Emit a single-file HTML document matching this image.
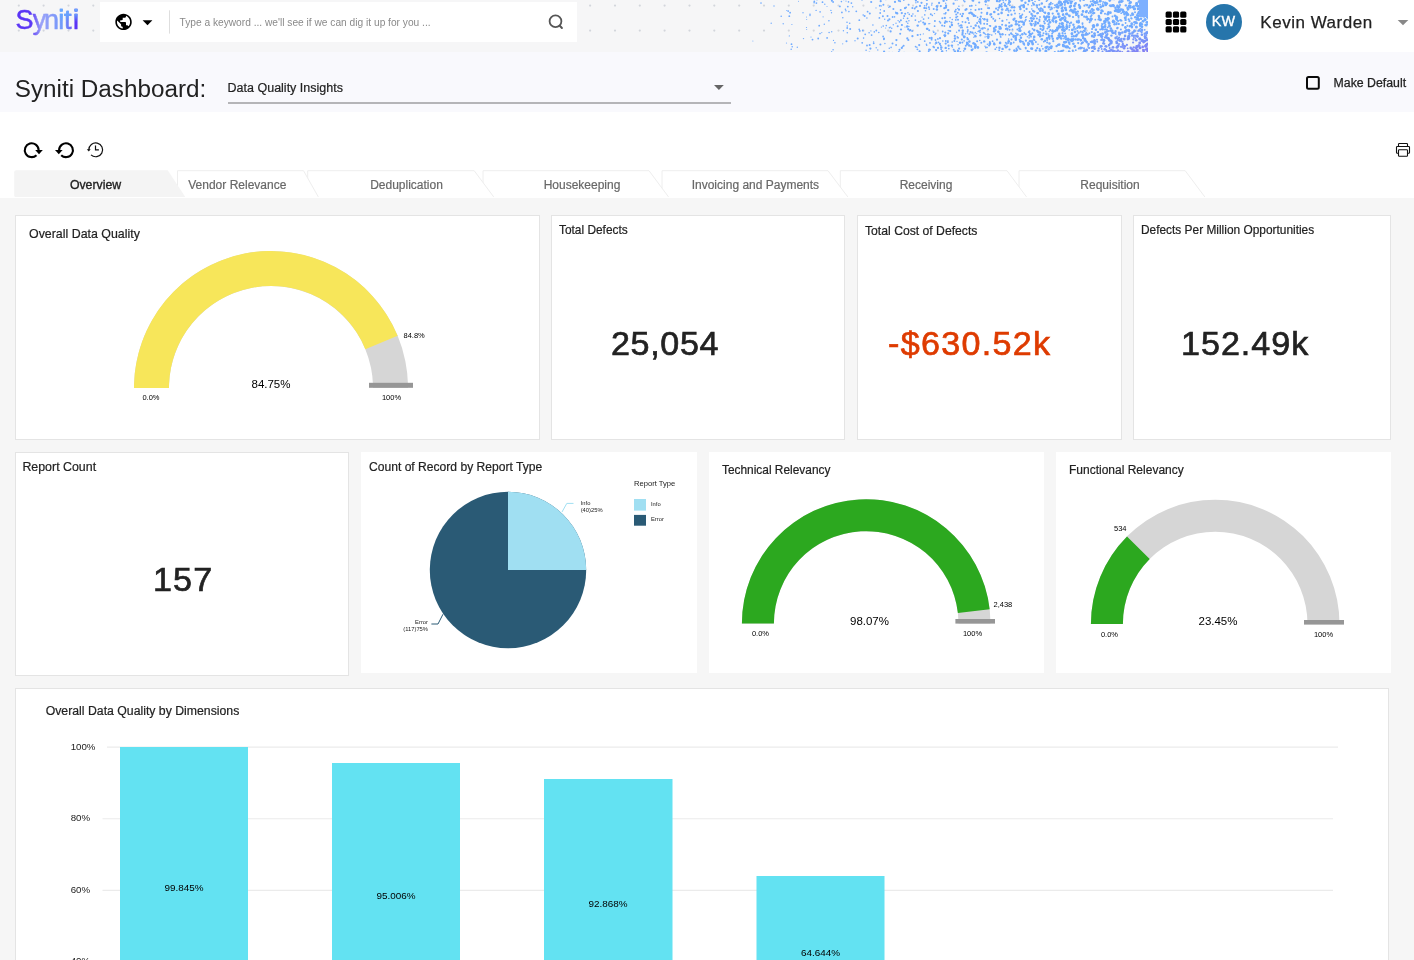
<!DOCTYPE html>
<html lang="en">
<head>
<meta charset="utf-8">
<title>Syniti Dashboard</title>
<style>
*{box-sizing:border-box;margin:0;padding:0}
html,body{width:1414px;height:960px;overflow:hidden}
body{position:relative;background:#f6f6f6;font-family:"Liberation Sans",sans-serif;color:#222}
.abs{position:absolute}
.t{position:absolute;white-space:nowrap;line-height:1}
#hdr{left:0;top:0;width:1414px;height:52px;background:#f6f6f7}
#search{left:100px;top:2px;width:477px;height:40px;background:#fff}
#userbox{left:1148px;top:0;width:266px;height:52px;background:#fff}
#band{left:0;top:52px;width:1414px;height:60px;background:#f9f9fd}
#tools{left:0;top:112px;width:1414px;height:85.900px;background:#fff}
.card{position:absolute;background:#fff;border:1px solid #e4e4e4}
.card.nb{border-color:#fff}
.ct{position:absolute;white-space:nowrap;line-height:1;font-size:12.4px;color:#222;-webkit-text-stroke:0.2px #222}
.kpi{position:absolute;white-space:nowrap;line-height:1;font-size:32.800px;color:#222;-webkit-text-stroke:0.650px currentColor;letter-spacing:0.600px;transform-origin:0 50%;transform:scaleX(1.040)}
.tab{position:absolute;top:170px;height:27px}
.tl{position:absolute;top:178.900px;white-space:nowrap;line-height:1;font-size:12px;color:#686868;-webkit-text-stroke:0.200px #686868;transform:translateX(-50%)}
svg{position:absolute;left:0;top:0;overflow:visible}
svg text{font-family:"Liberation Sans",sans-serif}
</style>
</head>
<body>
<div id="root" style="position:absolute;left:0;top:0;width:1414px;height:960px;will-change:transform">
<!-- header -->
<div id="hdr" class="abs"></div>
<svg width="1414" height="52" viewBox="0 0 1414 52" style="overflow:hidden">
<circle cx="18.8" cy="5.6" r="1.1" fill="#d3d6dc"/>
<circle cx="18.8" cy="30.6" r="1.1" fill="#d3d6dc"/>
<circle cx="43.6" cy="5.6" r="1.1" fill="#d3d6dc"/>
<circle cx="43.6" cy="30.6" r="1.1" fill="#d3d6dc"/>
<circle cx="68.5" cy="5.6" r="1.1" fill="#d3d6dc"/>
<circle cx="68.5" cy="30.6" r="1.1" fill="#d3d6dc"/>
<circle cx="93.3" cy="5.6" r="1.1" fill="#d3d6dc"/>
<circle cx="93.3" cy="30.6" r="1.1" fill="#d3d6dc"/>
<circle cx="590.1" cy="5.6" r="1.1" fill="#d3d6dc"/>
<circle cx="590.1" cy="30.6" r="1.1" fill="#d3d6dc"/>
<circle cx="615.0" cy="5.6" r="1.1" fill="#d3d6dc"/>
<circle cx="615.0" cy="30.6" r="1.1" fill="#d3d6dc"/>
<circle cx="639.8" cy="5.6" r="1.1" fill="#d3d6dc"/>
<circle cx="639.8" cy="30.6" r="1.1" fill="#d3d6dc"/>
<circle cx="664.6" cy="5.6" r="1.1" fill="#d3d6dc"/>
<circle cx="664.6" cy="30.6" r="1.1" fill="#d3d6dc"/>
<circle cx="689.5" cy="5.6" r="1.1" fill="#d3d6dc"/>
<circle cx="689.5" cy="30.6" r="1.1" fill="#d3d6dc"/>
<circle cx="714.3" cy="5.6" r="1.1" fill="#d3d6dc"/>
<circle cx="714.3" cy="30.6" r="1.1" fill="#d3d6dc"/>
<circle cx="739.2" cy="5.6" r="1.1" fill="#d3d6dc"/>
<circle cx="739.2" cy="30.6" r="1.1" fill="#d3d6dc"/>
<circle cx="764.0" cy="5.6" r="1.1" fill="#d3d6dc"/>
<circle cx="764.0" cy="30.6" r="1.1" fill="#d3d6dc"/>
<circle cx="788.8" cy="5.6" r="1.1" fill="#d3d6dc"/>
<circle cx="788.8" cy="30.6" r="1.1" fill="#d3d6dc"/>
<circle cx="813.7" cy="5.6" r="1.1" fill="#d3d6dc"/>
<circle cx="813.7" cy="30.6" r="1.1" fill="#d3d6dc"/>
<circle cx="838.5" cy="5.6" r="1.1" fill="#d3d6dc"/>
<circle cx="838.5" cy="30.6" r="1.1" fill="#d3d6dc"/>
<circle cx="863.4" cy="5.6" r="1.1" fill="#d3d6dc"/>
<circle cx="863.4" cy="30.6" r="1.1" fill="#d3d6dc"/>
<circle cx="888.2" cy="5.6" r="1.1" fill="#d3d6dc"/>
<circle cx="888.2" cy="30.6" r="1.1" fill="#d3d6dc"/>
<circle cx="913.0" cy="5.6" r="1.1" fill="#d3d6dc"/>
<circle cx="913.0" cy="30.6" r="1.1" fill="#d3d6dc"/>
<circle cx="937.9" cy="5.6" r="1.1" fill="#d3d6dc"/>
<circle cx="937.9" cy="30.6" r="1.1" fill="#d3d6dc"/>
<circle cx="962.7" cy="5.6" r="1.1" fill="#d3d6dc"/>
<circle cx="962.7" cy="30.6" r="1.1" fill="#d3d6dc"/>
<circle cx="987.6" cy="5.6" r="1.1" fill="#d3d6dc"/>
<circle cx="987.6" cy="30.6" r="1.1" fill="#d3d6dc"/>
<circle cx="1012.4" cy="5.6" r="1.1" fill="#d3d6dc"/>
<circle cx="1012.4" cy="30.6" r="1.1" fill="#d3d6dc"/>
<circle cx="1037.2" cy="5.6" r="1.1" fill="#d3d6dc"/>
<circle cx="1037.2" cy="30.6" r="1.1" fill="#d3d6dc"/>
<circle cx="1062.1" cy="5.6" r="1.1" fill="#d3d6dc"/>
<circle cx="1062.1" cy="30.6" r="1.1" fill="#d3d6dc"/>
<circle cx="1086.9" cy="5.6" r="1.1" fill="#d3d6dc"/>
<circle cx="1086.9" cy="30.6" r="1.1" fill="#d3d6dc"/>
<circle cx="1111.8" cy="5.6" r="1.1" fill="#d3d6dc"/>
<circle cx="1111.8" cy="30.6" r="1.1" fill="#d3d6dc"/>
<circle cx="1136.6" cy="5.6" r="1.1" fill="#d3d6dc"/>
<circle cx="1136.6" cy="30.6" r="1.1" fill="#d3d6dc"/>
<circle cx="917.8" cy="1.9" r="0.9" fill="rgb(112,171,255)"/>
<circle cx="1079.0" cy="4.9" r="1.2" fill="rgb(112,171,255)"/>
<circle cx="1128.6" cy="30.3" r="1.6" fill="rgb(114,165,253)"/>
<circle cx="1019.0" cy="21.9" r="1.1" fill="rgb(112,171,255)"/>
<circle cx="858.1" cy="52.9" r="0.8" fill="rgb(112,171,255)"/>
<circle cx="974.9" cy="47.0" r="1.1" fill="rgb(112,171,255)"/>
<circle cx="1084.4" cy="50.9" r="1.3" fill="rgb(114,164,253)"/>
<circle cx="1147.2" cy="44.0" r="1.2" fill="rgb(125,138,246)"/>
<circle cx="1055.0" cy="5.2" r="1.0" fill="rgb(112,171,255)"/>
<circle cx="1097.3" cy="2.5" r="1.2" fill="rgb(112,171,255)"/>
<circle cx="1102.5" cy="51.6" r="1.0" fill="rgb(119,152,250)"/>
<circle cx="981.5" cy="12.7" r="1.0" fill="rgb(112,171,255)"/>
<circle cx="900.9" cy="20.3" r="1.0" fill="rgb(112,171,255)"/>
<circle cx="806.5" cy="17.0" r="0.5" fill="rgb(112,171,255)"/>
<circle cx="1147.2" cy="24.1" r="0.9" fill="rgb(112,171,255)"/>
<circle cx="1079.8" cy="7.0" r="1.5" fill="rgb(112,171,255)"/>
<circle cx="1094.0" cy="37.0" r="1.1" fill="rgb(114,165,253)"/>
<circle cx="1059.4" cy="16.5" r="1.3" fill="rgb(112,171,255)"/>
<circle cx="1075.5" cy="39.4" r="1.2" fill="rgb(112,170,254)"/>
<circle cx="885.8" cy="-0.4" r="0.7" fill="rgb(112,171,255)"/>
<circle cx="1131.6" cy="18.4" r="1.0" fill="rgb(112,171,255)"/>
<circle cx="1109.1" cy="45.1" r="1.3" fill="rgb(118,154,250)"/>
<circle cx="1037.2" cy="7.5" r="0.9" fill="rgb(112,171,255)"/>
<circle cx="1111.0" cy="43.2" r="1.4" fill="rgb(118,155,251)"/>
<circle cx="1141.9" cy="34.8" r="1.3" fill="rgb(118,156,251)"/>
<circle cx="1126.3" cy="12.5" r="1.5" fill="rgb(112,171,255)"/>
<circle cx="1084.4" cy="5.7" r="1.1" fill="rgb(112,171,255)"/>
<circle cx="995.8" cy="26.7" r="1.3" fill="rgb(112,171,255)"/>
<circle cx="1063.2" cy="52.4" r="1.0" fill="rgb(112,171,255)"/>
<circle cx="1075.8" cy="12.5" r="1.4" fill="rgb(112,171,255)"/>
<circle cx="973.9" cy="37.2" r="0.7" fill="rgb(112,171,255)"/>
<circle cx="1022.2" cy="21.8" r="1.3" fill="rgb(112,171,255)"/>
<circle cx="1000.1" cy="42.9" r="1.3" fill="rgb(112,171,255)"/>
<circle cx="1040.6" cy="28.9" r="1.1" fill="rgb(112,171,255)"/>
<circle cx="1029.8" cy="33.6" r="1.0" fill="rgb(112,171,255)"/>
<circle cx="1043.8" cy="12.3" r="0.8" fill="rgb(112,171,255)"/>
<circle cx="866.9" cy="18.0" r="0.8" fill="rgb(112,171,255)"/>
<circle cx="934.6" cy="26.2" r="0.9" fill="rgb(112,171,255)"/>
<circle cx="903.8" cy="0.3" r="0.8" fill="rgb(112,171,255)"/>
<circle cx="1100.4" cy="19.8" r="1.5" fill="rgb(112,171,255)"/>
<circle cx="1024.3" cy="10.9" r="0.8" fill="rgb(112,171,255)"/>
<circle cx="1019.1" cy="25.4" r="1.2" fill="rgb(112,171,255)"/>
<circle cx="1140.1" cy="25.7" r="1.2" fill="rgb(112,171,255)"/>
<circle cx="1003.5" cy="2.3" r="0.9" fill="rgb(112,171,255)"/>
<circle cx="1136.9" cy="23.2" r="1.0" fill="rgb(112,171,255)"/>
<circle cx="1127.7" cy="9.8" r="1.0" fill="rgb(112,171,255)"/>
<circle cx="954.9" cy="51.4" r="1.2" fill="rgb(112,171,255)"/>
<circle cx="924.8" cy="14.9" r="0.8" fill="rgb(112,171,255)"/>
<circle cx="869.6" cy="45.1" r="1.0" fill="rgb(112,171,255)"/>
<circle cx="1032.3" cy="48.5" r="1.0" fill="rgb(112,171,255)"/>
<circle cx="1048.6" cy="34.1" r="0.8" fill="rgb(112,171,255)"/>
<circle cx="1120.0" cy="5.1" r="1.1" fill="rgb(112,171,255)"/>
<circle cx="968.5" cy="20.1" r="0.8" fill="rgb(112,171,255)"/>
<circle cx="924.5" cy="5.8" r="0.7" fill="rgb(112,171,255)"/>
<circle cx="1047.4" cy="21.1" r="1.1" fill="rgb(112,171,255)"/>
<circle cx="894.5" cy="16.9" r="0.8" fill="rgb(112,171,255)"/>
<circle cx="1136.8" cy="5.0" r="1.3" fill="rgb(112,171,255)"/>
<circle cx="1093.8" cy="10.1" r="1.0" fill="rgb(112,171,255)"/>
<circle cx="1088.0" cy="46.9" r="0.8" fill="rgb(114,163,253)"/>
<circle cx="1138.6" cy="11.9" r="1.0" fill="rgb(112,171,255)"/>
<circle cx="927.5" cy="28.9" r="1.1" fill="rgb(112,171,255)"/>
<circle cx="1000.9" cy="37.1" r="0.8" fill="rgb(112,171,255)"/>
<circle cx="831.7" cy="31.7" r="0.7" fill="rgb(112,171,255)"/>
<circle cx="1102.3" cy="24.6" r="1.0" fill="rgb(112,171,255)"/>
<circle cx="1133.9" cy="37.5" r="0.9" fill="rgb(119,153,250)"/>
<circle cx="912.4" cy="36.2" r="1.1" fill="rgb(112,171,255)"/>
<circle cx="1043.0" cy="26.3" r="1.4" fill="rgb(112,171,255)"/>
<circle cx="1130.3" cy="25.8" r="1.0" fill="rgb(112,171,255)"/>
<circle cx="1139.4" cy="5.9" r="0.9" fill="rgb(112,171,255)"/>
<circle cx="884.1" cy="51.5" r="1.1" fill="rgb(112,171,255)"/>
<circle cx="1077.0" cy="22.2" r="1.1" fill="rgb(112,171,255)"/>
<circle cx="889.3" cy="48.2" r="0.8" fill="rgb(112,171,255)"/>
<circle cx="1072.8" cy="40.9" r="0.8" fill="rgb(112,171,255)"/>
<circle cx="1046.4" cy="48.3" r="1.0" fill="rgb(112,171,255)"/>
<circle cx="1132.7" cy="32.6" r="1.4" fill="rgb(115,161,252)"/>
<circle cx="869.8" cy="13.4" r="1.0" fill="rgb(112,171,255)"/>
<circle cx="1132.3" cy="51.4" r="1.0" fill="rgb(127,134,245)"/>
<circle cx="1060.7" cy="2.4" r="1.3" fill="rgb(112,171,255)"/>
<circle cx="841.4" cy="1.6" r="0.8" fill="rgb(112,171,255)"/>
<circle cx="1145.0" cy="12.8" r="0.9" fill="rgb(112,171,255)"/>
<circle cx="1042.6" cy="9.2" r="0.9" fill="rgb(112,171,255)"/>
<circle cx="1007.9" cy="53.5" r="1.0" fill="rgb(112,171,255)"/>
<circle cx="985.8" cy="34.5" r="0.7" fill="rgb(112,171,255)"/>
<circle cx="964.7" cy="1.5" r="0.9" fill="rgb(112,171,255)"/>
<circle cx="965.6" cy="33.8" r="0.8" fill="rgb(112,171,255)"/>
<circle cx="1025.1" cy="20.9" r="0.9" fill="rgb(112,171,255)"/>
<circle cx="1130.8" cy="15.5" r="1.1" fill="rgb(112,171,255)"/>
<circle cx="1102.0" cy="23.8" r="0.8" fill="rgb(112,171,255)"/>
<circle cx="953.7" cy="49.8" r="1.0" fill="rgb(112,171,255)"/>
<circle cx="1070.0" cy="52.1" r="0.9" fill="rgb(112,171,255)"/>
<circle cx="1126.7" cy="52.6" r="0.9" fill="rgb(126,136,246)"/>
<circle cx="994.3" cy="44.2" r="1.2" fill="rgb(112,171,255)"/>
<circle cx="1080.0" cy="8.2" r="1.1" fill="rgb(112,171,255)"/>
<circle cx="952.3" cy="19.5" r="0.8" fill="rgb(112,171,255)"/>
<circle cx="1037.2" cy="48.2" r="1.1" fill="rgb(112,171,255)"/>
<circle cx="923.2" cy="22.5" r="1.0" fill="rgb(112,171,255)"/>
<circle cx="1059.8" cy="23.7" r="1.1" fill="rgb(112,171,255)"/>
<circle cx="1132.2" cy="49.3" r="1.4" fill="rgb(126,137,246)"/>
<circle cx="1121.5" cy="1.7" r="1.4" fill="rgb(112,171,255)"/>
<circle cx="1074.4" cy="6.0" r="1.4" fill="rgb(112,171,255)"/>
<circle cx="977.8" cy="47.4" r="1.3" fill="rgb(112,171,255)"/>
<circle cx="812.5" cy="39.6" r="0.9" fill="rgb(112,171,255)"/>
<circle cx="980.2" cy="35.2" r="0.7" fill="rgb(112,171,255)"/>
<circle cx="979.3" cy="31.0" r="1.1" fill="rgb(112,171,255)"/>
<circle cx="839.9" cy="6.4" r="0.9" fill="rgb(112,171,255)"/>
<circle cx="1097.2" cy="41.8" r="1.0" fill="rgb(115,161,252)"/>
<circle cx="1124.2" cy="39.1" r="1.5" fill="rgb(118,154,250)"/>
<circle cx="925.5" cy="10.7" r="0.8" fill="rgb(112,171,255)"/>
<circle cx="1063.3" cy="27.3" r="1.2" fill="rgb(112,171,255)"/>
<circle cx="973.8" cy="15.2" r="1.1" fill="rgb(112,171,255)"/>
<circle cx="881.4" cy="5.9" r="0.6" fill="rgb(112,171,255)"/>
<circle cx="1114.9" cy="50.9" r="1.0" fill="rgb(122,145,248)"/>
<circle cx="998.9" cy="14.1" r="0.8" fill="rgb(112,171,255)"/>
<circle cx="1050.5" cy="9.5" r="1.1" fill="rgb(112,171,255)"/>
<circle cx="1033.5" cy="18.6" r="1.4" fill="rgb(112,171,255)"/>
<circle cx="1140.9" cy="-1.8" r="1.2" fill="rgb(112,171,255)"/>
<circle cx="1127.0" cy="13.9" r="1.4" fill="rgb(112,171,255)"/>
<circle cx="1062.6" cy="33.2" r="1.1" fill="rgb(112,171,255)"/>
<circle cx="901.8" cy="47.9" r="1.1" fill="rgb(112,171,255)"/>
<circle cx="1109.5" cy="26.1" r="1.5" fill="rgb(112,170,254)"/>
<circle cx="882.9" cy="16.3" r="1.0" fill="rgb(112,171,255)"/>
<circle cx="1011.5" cy="39.6" r="1.0" fill="rgb(112,171,255)"/>
<circle cx="1057.1" cy="30.4" r="1.1" fill="rgb(112,171,255)"/>
<circle cx="1102.9" cy="11.3" r="1.0" fill="rgb(112,171,255)"/>
<circle cx="1028.3" cy="45.2" r="0.9" fill="rgb(112,171,255)"/>
<circle cx="1139.8" cy="38.8" r="1.6" fill="rgb(120,149,249)"/>
<circle cx="1065.9" cy="39.1" r="0.9" fill="rgb(112,171,255)"/>
<circle cx="1001.6" cy="4.0" r="1.0" fill="rgb(112,171,255)"/>
<circle cx="1032.4" cy="33.3" r="1.0" fill="rgb(112,171,255)"/>
<circle cx="1016.9" cy="50.1" r="1.2" fill="rgb(112,171,255)"/>
<circle cx="1139.6" cy="0.1" r="1.0" fill="rgb(112,171,255)"/>
<circle cx="1079.9" cy="27.2" r="1.5" fill="rgb(112,170,254)"/>
<circle cx="1125.4" cy="27.5" r="1.4" fill="rgb(112,169,254)"/>
<circle cx="900.7" cy="9.9" r="1.0" fill="rgb(112,171,255)"/>
<circle cx="1071.9" cy="33.5" r="1.2" fill="rgb(112,171,255)"/>
<circle cx="1088.8" cy="13.0" r="1.0" fill="rgb(112,171,255)"/>
<circle cx="914.7" cy="8.4" r="1.0" fill="rgb(112,171,255)"/>
<circle cx="1111.4" cy="41.9" r="1.4" fill="rgb(118,156,251)"/>
<circle cx="999.6" cy="-1.2" r="1.3" fill="rgb(112,171,255)"/>
<circle cx="1008.9" cy="12.0" r="0.8" fill="rgb(112,171,255)"/>
<circle cx="1063.1" cy="45.0" r="1.3" fill="rgb(112,171,255)"/>
<circle cx="1101.9" cy="29.1" r="1.0" fill="rgb(112,168,254)"/>
<circle cx="967.2" cy="44.3" r="1.2" fill="rgb(112,171,255)"/>
<circle cx="1064.7" cy="16.5" r="1.0" fill="rgb(112,171,255)"/>
<circle cx="963.6" cy="0.8" r="0.7" fill="rgb(112,171,255)"/>
<circle cx="1052.7" cy="3.7" r="0.8" fill="rgb(112,171,255)"/>
<circle cx="970.5" cy="12.4" r="0.9" fill="rgb(112,171,255)"/>
<circle cx="1122.9" cy="1.1" r="0.9" fill="rgb(112,171,255)"/>
<circle cx="1116.6" cy="23.0" r="1.1" fill="rgb(112,171,255)"/>
<circle cx="934.9" cy="21.1" r="1.0" fill="rgb(112,171,255)"/>
<circle cx="827.0" cy="6.5" r="0.5" fill="rgb(112,171,255)"/>
<circle cx="1040.8" cy="8.5" r="1.3" fill="rgb(112,171,255)"/>
<circle cx="1135.4" cy="38.2" r="0.9" fill="rgb(119,152,250)"/>
<circle cx="1006.8" cy="43.8" r="0.9" fill="rgb(112,171,255)"/>
<circle cx="1061.7" cy="29.7" r="0.8" fill="rgb(112,171,255)"/>
<circle cx="1080.8" cy="31.7" r="1.1" fill="rgb(112,170,254)"/>
<circle cx="1020.7" cy="49.2" r="0.8" fill="rgb(112,171,255)"/>
<circle cx="967.0" cy="42.7" r="1.1" fill="rgb(112,171,255)"/>
<circle cx="1017.8" cy="24.1" r="0.9" fill="rgb(112,171,255)"/>
<circle cx="1102.9" cy="27.2" r="1.2" fill="rgb(112,170,254)"/>
<circle cx="905.0" cy="27.0" r="0.6" fill="rgb(112,171,255)"/>
<circle cx="1148.8" cy="18.9" r="1.3" fill="rgb(112,171,255)"/>
<circle cx="881.4" cy="27.1" r="0.6" fill="rgb(112,171,255)"/>
<circle cx="1146.1" cy="46.5" r="1.3" fill="rgb(127,134,245)"/>
<circle cx="1135.0" cy="12.2" r="1.0" fill="rgb(112,171,255)"/>
<circle cx="814.1" cy="2.7" r="0.8" fill="rgb(112,171,255)"/>
<circle cx="1132.1" cy="35.5" r="1.2" fill="rgb(117,157,251)"/>
<circle cx="1125.1" cy="35.9" r="1.3" fill="rgb(117,158,251)"/>
<circle cx="1050.7" cy="3.9" r="0.9" fill="rgb(112,171,255)"/>
<circle cx="935.8" cy="33.2" r="0.8" fill="rgb(112,171,255)"/>
<circle cx="1084.2" cy="16.7" r="1.1" fill="rgb(112,171,255)"/>
<circle cx="870.4" cy="48.6" r="1.1" fill="rgb(112,171,255)"/>
<circle cx="879.8" cy="5.8" r="1.0" fill="rgb(112,171,255)"/>
<circle cx="1031.8" cy="9.0" r="0.8" fill="rgb(112,171,255)"/>
<circle cx="989.5" cy="25.7" r="0.8" fill="rgb(112,171,255)"/>
<circle cx="979.0" cy="9.3" r="1.1" fill="rgb(112,171,255)"/>
<circle cx="907.3" cy="38.4" r="1.1" fill="rgb(112,171,255)"/>
<circle cx="1074.8" cy="46.5" r="1.3" fill="rgb(112,170,254)"/>
<circle cx="896.4" cy="40.1" r="1.1" fill="rgb(112,171,255)"/>
<circle cx="1131.2" cy="25.7" r="1.2" fill="rgb(112,171,255)"/>
<circle cx="842.7" cy="43.8" r="0.6" fill="rgb(112,171,255)"/>
<circle cx="1026.6" cy="8.9" r="1.1" fill="rgb(112,171,255)"/>
<circle cx="945.3" cy="13.7" r="0.9" fill="rgb(112,171,255)"/>
<circle cx="1058.5" cy="17.0" r="1.0" fill="rgb(112,171,255)"/>
<circle cx="1123.1" cy="12.0" r="1.3" fill="rgb(112,171,255)"/>
<circle cx="889.4" cy="27.7" r="0.8" fill="rgb(112,171,255)"/>
<circle cx="947.0" cy="-0.8" r="1.2" fill="rgb(112,171,255)"/>
<circle cx="1119.0" cy="32.8" r="1.2" fill="rgb(115,163,253)"/>
<circle cx="865.2" cy="34.3" r="0.9" fill="rgb(112,171,255)"/>
<circle cx="1132.0" cy="26.8" r="1.2" fill="rgb(112,169,254)"/>
<circle cx="958.9" cy="6.3" r="0.8" fill="rgb(112,171,255)"/>
<circle cx="932.3" cy="15.4" r="0.8" fill="rgb(112,171,255)"/>
<circle cx="1056.6" cy="6.9" r="1.4" fill="rgb(112,171,255)"/>
<circle cx="920.4" cy="39.2" r="0.8" fill="rgb(112,171,255)"/>
<circle cx="1133.3" cy="39.4" r="1.1" fill="rgb(120,151,250)"/>
<circle cx="1088.5" cy="44.0" r="1.3" fill="rgb(114,164,253)"/>
<circle cx="792.2" cy="46.8" r="0.8" fill="rgb(112,171,255)"/>
<circle cx="1097.8" cy="32.0" r="1.1" fill="rgb(113,167,254)"/>
<circle cx="944.8" cy="22.9" r="0.8" fill="rgb(112,171,255)"/>
<circle cx="1128.6" cy="35.9" r="0.9" fill="rgb(117,157,251)"/>
<circle cx="1148.4" cy="17.2" r="1.5" fill="rgb(112,171,255)"/>
<circle cx="1078.7" cy="26.7" r="1.4" fill="rgb(112,170,254)"/>
<circle cx="1104.1" cy="21.6" r="1.0" fill="rgb(112,171,255)"/>
<circle cx="949.8" cy="26.3" r="0.8" fill="rgb(112,171,255)"/>
<circle cx="998.3" cy="31.8" r="1.3" fill="rgb(112,171,255)"/>
<circle cx="980.3" cy="35.4" r="1.0" fill="rgb(112,171,255)"/>
<circle cx="908.6" cy="4.8" r="1.0" fill="rgb(112,171,255)"/>
<circle cx="1070.7" cy="1.5" r="1.3" fill="rgb(112,171,255)"/>
<circle cx="1110.6" cy="30.6" r="1.2" fill="rgb(113,166,253)"/>
<circle cx="994.3" cy="12.0" r="1.3" fill="rgb(112,171,255)"/>
<circle cx="938.6" cy="42.4" r="0.8" fill="rgb(112,171,255)"/>
<circle cx="859.2" cy="29.4" r="0.8" fill="rgb(112,171,255)"/>
<circle cx="898.1" cy="20.6" r="0.7" fill="rgb(112,171,255)"/>
<circle cx="1078.6" cy="17.7" r="0.9" fill="rgb(112,171,255)"/>
<circle cx="856.3" cy="11.3" r="0.9" fill="rgb(112,171,255)"/>
<circle cx="1070.0" cy="6.9" r="1.3" fill="rgb(112,171,255)"/>
<circle cx="1129.9" cy="26.3" r="1.2" fill="rgb(112,170,254)"/>
<circle cx="1108.8" cy="30.9" r="1.0" fill="rgb(113,166,253)"/>
<circle cx="1009.6" cy="29.8" r="1.0" fill="rgb(112,171,255)"/>
<circle cx="871.6" cy="35.1" r="0.9" fill="rgb(112,171,255)"/>
<circle cx="1101.9" cy="46.2" r="1.0" fill="rgb(117,157,251)"/>
<circle cx="1032.2" cy="0.3" r="0.9" fill="rgb(112,171,255)"/>
<circle cx="1020.6" cy="17.5" r="1.3" fill="rgb(112,171,255)"/>
<circle cx="1058.4" cy="14.0" r="1.4" fill="rgb(112,171,255)"/>
<circle cx="989.0" cy="0.7" r="0.8" fill="rgb(112,171,255)"/>
<circle cx="1028.1" cy="43.1" r="1.1" fill="rgb(112,171,255)"/>
<circle cx="1137.5" cy="33.7" r="1.0" fill="rgb(117,158,251)"/>
<circle cx="1029.9" cy="35.5" r="0.9" fill="rgb(112,171,255)"/>
<circle cx="888.8" cy="7.4" r="0.6" fill="rgb(112,171,255)"/>
<circle cx="1146.8" cy="40.0" r="1.4" fill="rgb(122,145,248)"/>
<circle cx="1141.9" cy="29.6" r="1.2" fill="rgb(114,164,253)"/>
<circle cx="1086.7" cy="49.9" r="1.4" fill="rgb(115,163,253)"/>
<circle cx="1080.5" cy="39.6" r="0.9" fill="rgb(112,168,254)"/>
<circle cx="1078.4" cy="15.9" r="1.2" fill="rgb(112,171,255)"/>
<circle cx="1127.4" cy="25.7" r="1.0" fill="rgb(112,171,255)"/>
<circle cx="862.8" cy="30.5" r="0.9" fill="rgb(112,171,255)"/>
<circle cx="818.2" cy="38.5" r="0.9" fill="rgb(112,171,255)"/>
<circle cx="1090.7" cy="42.1" r="1.0" fill="rgb(114,164,253)"/>
<circle cx="1078.7" cy="48.6" r="1.0" fill="rgb(112,168,254)"/>
<circle cx="994.1" cy="43.4" r="1.1" fill="rgb(112,171,255)"/>
<circle cx="950.4" cy="31.0" r="0.9" fill="rgb(112,171,255)"/>
<circle cx="1128.7" cy="38.4" r="1.3" fill="rgb(119,154,250)"/>
<circle cx="1083.6" cy="30.6" r="0.8" fill="rgb(112,169,254)"/>
<circle cx="1129.0" cy="-1.2" r="1.0" fill="rgb(112,171,255)"/>
<circle cx="1097.9" cy="32.2" r="1.1" fill="rgb(113,167,254)"/>
<circle cx="1144.4" cy="0.5" r="1.4" fill="rgb(112,171,255)"/>
<circle cx="1132.4" cy="53.6" r="1.3" fill="rgb(128,130,244)"/>
<circle cx="999.6" cy="33.5" r="0.9" fill="rgb(112,171,255)"/>
<circle cx="1145.3" cy="25.0" r="1.1" fill="rgb(112,171,255)"/>
<circle cx="979.2" cy="2.5" r="1.1" fill="rgb(112,171,255)"/>
<circle cx="915.6" cy="46.6" r="0.9" fill="rgb(112,171,255)"/>
<circle cx="1108.6" cy="13.4" r="0.9" fill="rgb(112,171,255)"/>
<circle cx="1099.0" cy="17.1" r="1.0" fill="rgb(112,171,255)"/>
<circle cx="1118.4" cy="9.9" r="1.4" fill="rgb(112,171,255)"/>
<circle cx="942.7" cy="31.5" r="0.9" fill="rgb(112,171,255)"/>
<circle cx="1144.9" cy="1.1" r="1.4" fill="rgb(112,171,255)"/>
<circle cx="1140.7" cy="23.4" r="1.3" fill="rgb(112,171,255)"/>
<circle cx="1125.8" cy="5.4" r="1.2" fill="rgb(112,171,255)"/>
<circle cx="1008.7" cy="41.4" r="1.4" fill="rgb(112,171,255)"/>
<circle cx="833.5" cy="40.4" r="0.6" fill="rgb(112,171,255)"/>
<circle cx="889.9" cy="6.4" r="1.0" fill="rgb(112,171,255)"/>
<circle cx="1117.8" cy="7.1" r="1.4" fill="rgb(112,171,255)"/>
<circle cx="917.9" cy="11.0" r="1.1" fill="rgb(112,171,255)"/>
<circle cx="1093.9" cy="46.7" r="1.3" fill="rgb(116,160,252)"/>
<circle cx="1077.4" cy="13.8" r="1.1" fill="rgb(112,171,255)"/>
<circle cx="862.0" cy="-0.6" r="1.1" fill="rgb(112,171,255)"/>
<circle cx="1041.8" cy="3.5" r="1.2" fill="rgb(112,171,255)"/>
<circle cx="1100.2" cy="4.7" r="0.9" fill="rgb(112,171,255)"/>
<circle cx="1116.7" cy="17.6" r="1.5" fill="rgb(112,171,255)"/>
<circle cx="1102.1" cy="39.0" r="1.0" fill="rgb(115,162,252)"/>
<circle cx="848.5" cy="1.9" r="0.8" fill="rgb(112,171,255)"/>
<circle cx="1138.9" cy="19.7" r="1.2" fill="rgb(112,171,255)"/>
<circle cx="798.7" cy="53.9" r="0.8" fill="rgb(112,171,255)"/>
<circle cx="869.4" cy="52.4" r="1.0" fill="rgb(112,171,255)"/>
<circle cx="1073.5" cy="11.4" r="1.4" fill="rgb(112,171,255)"/>
<circle cx="1106.6" cy="46.6" r="1.1" fill="rgb(118,154,250)"/>
<circle cx="1081.2" cy="43.8" r="0.9" fill="rgb(113,168,254)"/>
<circle cx="1069.3" cy="27.2" r="0.9" fill="rgb(112,171,255)"/>
<circle cx="1092.1" cy="9.3" r="1.4" fill="rgb(112,171,255)"/>
<circle cx="993.3" cy="18.8" r="1.0" fill="rgb(112,171,255)"/>
<circle cx="1109.5" cy="40.4" r="1.3" fill="rgb(117,158,251)"/>
<circle cx="1075.2" cy="3.7" r="1.3" fill="rgb(112,171,255)"/>
<circle cx="1031.5" cy="25.0" r="1.2" fill="rgb(112,171,255)"/>
<circle cx="1074.9" cy="46.8" r="1.0" fill="rgb(112,170,254)"/>
<circle cx="949.5" cy="21.5" r="0.8" fill="rgb(112,171,255)"/>
<circle cx="845.4" cy="9.3" r="0.8" fill="rgb(112,171,255)"/>
<circle cx="1100.0" cy="1.2" r="1.3" fill="rgb(112,171,255)"/>
<circle cx="1016.3" cy="35.8" r="0.9" fill="rgb(112,171,255)"/>
<circle cx="1061.5" cy="51.2" r="1.2" fill="rgb(112,171,255)"/>
<circle cx="1067.7" cy="52.9" r="0.8" fill="rgb(112,171,255)"/>
<circle cx="985.1" cy="28.3" r="0.8" fill="rgb(112,171,255)"/>
<circle cx="833.1" cy="49.8" r="0.8" fill="rgb(112,171,255)"/>
<circle cx="1009.2" cy="0.8" r="1.0" fill="rgb(112,171,255)"/>
<circle cx="1063.0" cy="14.7" r="1.2" fill="rgb(112,171,255)"/>
<circle cx="984.2" cy="23.8" r="1.0" fill="rgb(112,171,255)"/>
<circle cx="1011.9" cy="7.2" r="1.3" fill="rgb(112,171,255)"/>
<circle cx="936.9" cy="6.3" r="1.2" fill="rgb(112,171,255)"/>
<circle cx="945.7" cy="47.9" r="1.2" fill="rgb(112,171,255)"/>
<circle cx="803.0" cy="12.8" r="0.7" fill="rgb(112,171,255)"/>
<circle cx="1023.7" cy="43.6" r="1.3" fill="rgb(112,171,255)"/>
<circle cx="929.3" cy="49.6" r="1.2" fill="rgb(112,171,255)"/>
<circle cx="908.9" cy="20.8" r="0.8" fill="rgb(112,171,255)"/>
<circle cx="1040.8" cy="36.0" r="1.0" fill="rgb(112,171,255)"/>
<circle cx="1086.7" cy="42.1" r="1.3" fill="rgb(114,166,253)"/>
<circle cx="1015.8" cy="39.8" r="1.3" fill="rgb(112,171,255)"/>
<circle cx="958.0" cy="51.0" r="1.2" fill="rgb(112,171,255)"/>
<circle cx="1021.0" cy="37.8" r="1.2" fill="rgb(112,171,255)"/>
<circle cx="1078.6" cy="20.7" r="1.3" fill="rgb(112,171,255)"/>
<circle cx="1082.9" cy="42.4" r="1.1" fill="rgb(113,167,254)"/>
<circle cx="1086.3" cy="32.7" r="0.9" fill="rgb(112,169,254)"/>
<circle cx="1011.0" cy="43.2" r="1.2" fill="rgb(112,171,255)"/>
<circle cx="1106.5" cy="20.1" r="1.5" fill="rgb(112,171,255)"/>
<circle cx="947.8" cy="53.4" r="1.1" fill="rgb(112,171,255)"/>
<circle cx="806.5" cy="27.5" r="0.6" fill="rgb(112,171,255)"/>
<circle cx="842.8" cy="17.7" r="0.8" fill="rgb(112,171,255)"/>
<circle cx="1093.5" cy="26.8" r="1.5" fill="rgb(112,170,254)"/>
<circle cx="1106.5" cy="35.3" r="1.3" fill="rgb(115,163,253)"/>
<circle cx="1011.1" cy="33.4" r="1.1" fill="rgb(112,171,255)"/>
<circle cx="889.1" cy="52.7" r="1.0" fill="rgb(112,171,255)"/>
<circle cx="1047.4" cy="-0.0" r="0.9" fill="rgb(112,171,255)"/>
<circle cx="1130.7" cy="47.9" r="1.3" fill="rgb(124,140,247)"/>
<circle cx="1046.4" cy="33.9" r="1.3" fill="rgb(112,171,255)"/>
<circle cx="1031.0" cy="36.7" r="0.9" fill="rgb(112,171,255)"/>
<circle cx="810.0" cy="15.5" r="0.7" fill="rgb(112,171,255)"/>
<circle cx="1048.6" cy="13.4" r="1.4" fill="rgb(112,171,255)"/>
<circle cx="846.5" cy="41.2" r="1.0" fill="rgb(112,171,255)"/>
<circle cx="848.9" cy="11.6" r="0.8" fill="rgb(112,171,255)"/>
<circle cx="1049.0" cy="36.0" r="1.3" fill="rgb(112,171,255)"/>
<circle cx="1044.4" cy="17.1" r="1.3" fill="rgb(112,171,255)"/>
<circle cx="1109.6" cy="5.5" r="0.9" fill="rgb(112,171,255)"/>
<circle cx="1063.3" cy="45.0" r="1.2" fill="rgb(112,171,255)"/>
<circle cx="1006.0" cy="47.2" r="1.2" fill="rgb(112,171,255)"/>
<circle cx="1028.5" cy="32.3" r="0.8" fill="rgb(112,171,255)"/>
<circle cx="987.4" cy="44.2" r="0.8" fill="rgb(112,171,255)"/>
<circle cx="1139.7" cy="42.9" r="1.4" fill="rgb(123,143,248)"/>
<circle cx="967.5" cy="43.2" r="1.2" fill="rgb(112,171,255)"/>
<circle cx="946.9" cy="21.7" r="1.0" fill="rgb(112,171,255)"/>
<circle cx="1037.1" cy="30.8" r="1.1" fill="rgb(112,171,255)"/>
<circle cx="875.1" cy="53.2" r="0.8" fill="rgb(112,171,255)"/>
<circle cx="1030.4" cy="23.5" r="0.9" fill="rgb(112,171,255)"/>
<circle cx="905.2" cy="13.8" r="1.0" fill="rgb(112,171,255)"/>
<circle cx="951.6" cy="22.6" r="1.1" fill="rgb(112,171,255)"/>
<circle cx="1035.0" cy="1.5" r="0.8" fill="rgb(112,171,255)"/>
<circle cx="999.2" cy="53.5" r="0.7" fill="rgb(112,171,255)"/>
<circle cx="1069.8" cy="23.5" r="0.9" fill="rgb(112,171,255)"/>
<circle cx="935.3" cy="44.0" r="0.7" fill="rgb(112,171,255)"/>
<circle cx="971.0" cy="26.4" r="0.8" fill="rgb(112,171,255)"/>
<circle cx="1127.6" cy="52.9" r="1.4" fill="rgb(126,135,246)"/>
<circle cx="980.0" cy="19.2" r="1.2" fill="rgb(112,171,255)"/>
<circle cx="1062.3" cy="24.0" r="1.4" fill="rgb(112,171,255)"/>
<circle cx="1002.2" cy="9.5" r="1.3" fill="rgb(112,171,255)"/>
<circle cx="1015.9" cy="38.0" r="1.2" fill="rgb(112,171,255)"/>
<circle cx="1023.7" cy="24.4" r="1.3" fill="rgb(112,171,255)"/>
<circle cx="985.6" cy="1.5" r="1.3" fill="rgb(112,171,255)"/>
<circle cx="1069.1" cy="0.1" r="1.0" fill="rgb(112,171,255)"/>
<circle cx="847.8" cy="6.6" r="0.9" fill="rgb(112,171,255)"/>
<circle cx="1104.8" cy="49.3" r="1.4" fill="rgb(119,153,250)"/>
<circle cx="859.3" cy="20.2" r="0.9" fill="rgb(112,171,255)"/>
<circle cx="1140.3" cy="28.6" r="0.9" fill="rgb(113,166,253)"/>
<circle cx="1141.2" cy="41.1" r="0.9" fill="rgb(122,145,248)"/>
<circle cx="1083.2" cy="38.1" r="1.3" fill="rgb(113,168,254)"/>
<circle cx="1029.7" cy="12.1" r="1.0" fill="rgb(112,171,255)"/>
<circle cx="1048.6" cy="13.4" r="1.0" fill="rgb(112,171,255)"/>
<circle cx="960.3" cy="52.1" r="1.0" fill="rgb(112,171,255)"/>
<circle cx="1136.6" cy="3.0" r="1.1" fill="rgb(112,171,255)"/>
<circle cx="1111.7" cy="-1.2" r="1.4" fill="rgb(112,171,255)"/>
<circle cx="1145.8" cy="7.9" r="1.4" fill="rgb(112,171,255)"/>
<circle cx="841.9" cy="12.4" r="0.9" fill="rgb(112,171,255)"/>
<circle cx="985.1" cy="36.9" r="0.7" fill="rgb(112,171,255)"/>
<circle cx="1137.5" cy="36.5" r="1.4" fill="rgb(118,154,250)"/>
<circle cx="880.4" cy="44.6" r="1.0" fill="rgb(112,171,255)"/>
<circle cx="1015.0" cy="13.5" r="0.9" fill="rgb(112,171,255)"/>
<circle cx="980.7" cy="35.0" r="0.8" fill="rgb(112,171,255)"/>
<circle cx="1007.4" cy="29.9" r="0.8" fill="rgb(112,171,255)"/>
<circle cx="890.2" cy="27.3" r="0.7" fill="rgb(112,171,255)"/>
<circle cx="1066.3" cy="14.0" r="1.3" fill="rgb(112,171,255)"/>
<circle cx="933.4" cy="46.7" r="1.0" fill="rgb(112,171,255)"/>
<circle cx="1082.9" cy="11.1" r="1.1" fill="rgb(112,171,255)"/>
<circle cx="955.2" cy="11.4" r="1.2" fill="rgb(112,171,255)"/>
<circle cx="1043.6" cy="28.1" r="1.1" fill="rgb(112,171,255)"/>
<circle cx="988.0" cy="34.5" r="1.2" fill="rgb(112,171,255)"/>
<circle cx="920.0" cy="5.9" r="1.1" fill="rgb(112,171,255)"/>
<circle cx="1031.8" cy="5.7" r="0.8" fill="rgb(112,171,255)"/>
<circle cx="1133.7" cy="6.4" r="1.2" fill="rgb(112,171,255)"/>
<circle cx="978.4" cy="47.6" r="0.8" fill="rgb(112,171,255)"/>
<circle cx="1092.7" cy="51.6" r="1.5" fill="rgb(116,159,252)"/>
<circle cx="1134.6" cy="8.8" r="1.5" fill="rgb(112,171,255)"/>
<circle cx="954.8" cy="35.9" r="1.1" fill="rgb(112,171,255)"/>
<circle cx="1067.8" cy="-1.5" r="1.3" fill="rgb(112,171,255)"/>
<circle cx="1030.7" cy="34.3" r="1.4" fill="rgb(112,171,255)"/>
<circle cx="1062.1" cy="11.0" r="1.4" fill="rgb(112,171,255)"/>
<circle cx="906.5" cy="21.6" r="0.9" fill="rgb(112,171,255)"/>
<circle cx="1126.4" cy="30.3" r="1.4" fill="rgb(114,165,253)"/>
<circle cx="1029.0" cy="52.1" r="1.2" fill="rgb(112,171,255)"/>
<circle cx="981.4" cy="9.1" r="1.0" fill="rgb(112,171,255)"/>
<circle cx="1037.5" cy="13.3" r="0.8" fill="rgb(112,171,255)"/>
<circle cx="811.0" cy="37.0" r="0.6" fill="rgb(112,171,255)"/>
<circle cx="1137.7" cy="6.3" r="1.3" fill="rgb(112,171,255)"/>
<circle cx="846.0" cy="1.1" r="0.6" fill="rgb(112,171,255)"/>
<circle cx="1120.9" cy="29.4" r="1.0" fill="rgb(113,167,254)"/>
<circle cx="971.7" cy="5.7" r="1.0" fill="rgb(112,171,255)"/>
<circle cx="1133.1" cy="42.5" r="1.1" fill="rgb(122,146,248)"/>
<circle cx="929.3" cy="9.1" r="0.9" fill="rgb(112,171,255)"/>
<circle cx="957.0" cy="41.4" r="0.7" fill="rgb(112,171,255)"/>
<circle cx="1014.1" cy="10.4" r="1.0" fill="rgb(112,171,255)"/>
<circle cx="1032.1" cy="41.1" r="1.0" fill="rgb(112,171,255)"/>
<circle cx="1113.0" cy="5.2" r="1.3" fill="rgb(112,171,255)"/>
<circle cx="1056.0" cy="22.5" r="1.0" fill="rgb(112,171,255)"/>
<circle cx="958.1" cy="44.7" r="0.8" fill="rgb(112,171,255)"/>
<circle cx="1053.6" cy="21.8" r="0.9" fill="rgb(112,171,255)"/>
<circle cx="1033.6" cy="39.1" r="0.9" fill="rgb(112,171,255)"/>
<circle cx="932.4" cy="53.5" r="1.1" fill="rgb(112,171,255)"/>
<circle cx="1108.8" cy="51.3" r="1.4" fill="rgb(121,149,249)"/>
<circle cx="1075.8" cy="12.9" r="1.1" fill="rgb(112,171,255)"/>
<circle cx="884.7" cy="19.2" r="0.7" fill="rgb(112,171,255)"/>
<circle cx="1103.8" cy="40.3" r="1.5" fill="rgb(116,160,252)"/>
<circle cx="1049.5" cy="43.5" r="1.2" fill="rgb(112,171,255)"/>
<circle cx="896.1" cy="45.0" r="0.9" fill="rgb(112,171,255)"/>
<circle cx="1017.5" cy="34.5" r="1.3" fill="rgb(112,171,255)"/>
<circle cx="781.2" cy="16.3" r="0.8" fill="rgb(112,171,255)"/>
<circle cx="833.1" cy="2.0" r="0.9" fill="rgb(112,171,255)"/>
<circle cx="1069.0" cy="51.4" r="1.2" fill="rgb(112,171,255)"/>
<circle cx="1080.0" cy="27.0" r="1.1" fill="rgb(112,170,254)"/>
<circle cx="1101.0" cy="35.3" r="1.1" fill="rgb(114,164,253)"/>
<circle cx="791.2" cy="49.2" r="0.8" fill="rgb(112,171,255)"/>
<circle cx="1063.4" cy="18.0" r="1.3" fill="rgb(112,171,255)"/>
<circle cx="1146.9" cy="22.3" r="1.4" fill="rgb(112,171,255)"/>
<circle cx="1121.2" cy="9.3" r="1.1" fill="rgb(112,171,255)"/>
<circle cx="945.1" cy="35.4" r="1.2" fill="rgb(112,171,255)"/>
<circle cx="1051.4" cy="46.6" r="1.4" fill="rgb(112,171,255)"/>
<circle cx="932.0" cy="3.2" r="0.8" fill="rgb(112,171,255)"/>
<circle cx="1033.9" cy="39.9" r="0.9" fill="rgb(112,171,255)"/>
<circle cx="921.5" cy="2.8" r="1.1" fill="rgb(112,171,255)"/>
<circle cx="1001.9" cy="53.9" r="1.2" fill="rgb(112,171,255)"/>
<circle cx="1027.5" cy="52.2" r="1.0" fill="rgb(112,171,255)"/>
<circle cx="1117.3" cy="20.5" r="1.1" fill="rgb(112,171,255)"/>
<circle cx="1129.2" cy="6.1" r="1.5" fill="rgb(112,171,255)"/>
<circle cx="905.0" cy="8.2" r="1.1" fill="rgb(112,171,255)"/>
<circle cx="1068.2" cy="-0.5" r="1.1" fill="rgb(112,171,255)"/>
<circle cx="1002.1" cy="24.7" r="1.0" fill="rgb(112,171,255)"/>
<circle cx="989.8" cy="42.0" r="0.9" fill="rgb(112,171,255)"/>
<circle cx="1070.3" cy="6.2" r="0.8" fill="rgb(112,171,255)"/>
<circle cx="1113.2" cy="51.0" r="1.5" fill="rgb(122,146,248)"/>
<circle cx="883.9" cy="39.3" r="0.9" fill="rgb(112,171,255)"/>
<circle cx="1064.3" cy="30.2" r="1.4" fill="rgb(112,171,255)"/>
<circle cx="969.9" cy="6.0" r="0.9" fill="rgb(112,171,255)"/>
<circle cx="1062.2" cy="26.8" r="1.3" fill="rgb(112,171,255)"/>
<circle cx="1112.0" cy="30.8" r="1.5" fill="rgb(113,166,253)"/>
<circle cx="1039.4" cy="34.3" r="1.1" fill="rgb(112,171,255)"/>
<circle cx="1126.7" cy="53.9" r="1.3" fill="rgb(127,134,245)"/>
<circle cx="1071.5" cy="40.5" r="1.4" fill="rgb(112,171,255)"/>
<circle cx="961.8" cy="39.5" r="1.1" fill="rgb(112,171,255)"/>
<circle cx="1089.1" cy="48.0" r="1.1" fill="rgb(115,162,252)"/>
<circle cx="1019.6" cy="39.7" r="1.0" fill="rgb(112,171,255)"/>
<circle cx="906.1" cy="7.4" r="0.9" fill="rgb(112,171,255)"/>
<circle cx="1133.5" cy="53.0" r="1.3" fill="rgb(128,131,245)"/>
<circle cx="1136.4" cy="19.6" r="1.1" fill="rgb(112,171,255)"/>
<circle cx="1128.8" cy="36.4" r="1.6" fill="rgb(117,156,251)"/>
<circle cx="1138.9" cy="1.6" r="1.3" fill="rgb(112,171,255)"/>
<circle cx="1032.4" cy="-1.9" r="1.0" fill="rgb(112,171,255)"/>
<circle cx="1137.3" cy="15.5" r="0.9" fill="rgb(112,171,255)"/>
<circle cx="1078.0" cy="-1.3" r="0.9" fill="rgb(112,171,255)"/>
<circle cx="981.3" cy="42.8" r="1.0" fill="rgb(112,171,255)"/>
<circle cx="962.9" cy="-1.2" r="0.9" fill="rgb(112,171,255)"/>
<circle cx="1077.8" cy="11.5" r="1.1" fill="rgb(112,171,255)"/>
<circle cx="987.7" cy="8.1" r="0.8" fill="rgb(112,171,255)"/>
<circle cx="1124.0" cy="11.7" r="1.1" fill="rgb(112,171,255)"/>
<circle cx="915.8" cy="7.3" r="0.7" fill="rgb(112,171,255)"/>
<circle cx="1087.5" cy="34.3" r="1.2" fill="rgb(113,168,254)"/>
<circle cx="917.7" cy="35.0" r="1.1" fill="rgb(112,171,255)"/>
<circle cx="1147.5" cy="16.8" r="1.4" fill="rgb(112,171,255)"/>
<circle cx="916.6" cy="6.7" r="0.9" fill="rgb(112,171,255)"/>
<circle cx="1146.1" cy="49.5" r="1.2" fill="rgb(129,128,244)"/>
<circle cx="1122.9" cy="43.6" r="1.0" fill="rgb(120,149,249)"/>
<circle cx="1094.5" cy="33.7" r="1.4" fill="rgb(113,167,254)"/>
<circle cx="1033.9" cy="4.5" r="1.2" fill="rgb(112,171,255)"/>
<circle cx="1098.6" cy="53.8" r="1.5" fill="rgb(119,154,250)"/>
<circle cx="949.3" cy="30.9" r="0.8" fill="rgb(112,171,255)"/>
<circle cx="1060.2" cy="27.0" r="1.4" fill="rgb(112,171,255)"/>
<circle cx="937.9" cy="38.9" r="0.9" fill="rgb(112,171,255)"/>
<circle cx="1049.4" cy="39.1" r="0.9" fill="rgb(112,171,255)"/>
<circle cx="1000.4" cy="36.8" r="0.8" fill="rgb(112,171,255)"/>
<circle cx="1069.8" cy="10.8" r="0.9" fill="rgb(112,171,255)"/>
<circle cx="1066.2" cy="39.3" r="1.0" fill="rgb(112,171,255)"/>
<circle cx="1139.4" cy="8.3" r="1.1" fill="rgb(112,171,255)"/>
<circle cx="1118.1" cy="45.8" r="1.5" fill="rgb(120,149,249)"/>
<circle cx="1105.2" cy="21.9" r="1.4" fill="rgb(112,171,255)"/>
<circle cx="996.1" cy="8.6" r="1.1" fill="rgb(112,171,255)"/>
<circle cx="990.5" cy="14.5" r="1.2" fill="rgb(112,171,255)"/>
<circle cx="975.6" cy="16.0" r="0.9" fill="rgb(112,171,255)"/>
<circle cx="936.5" cy="53.3" r="0.9" fill="rgb(112,171,255)"/>
<circle cx="1085.3" cy="28.7" r="1.4" fill="rgb(112,170,254)"/>
<circle cx="920.6" cy="53.6" r="0.9" fill="rgb(112,171,255)"/>
<circle cx="951.6" cy="53.0" r="1.0" fill="rgb(112,171,255)"/>
<circle cx="1086.5" cy="17.0" r="1.5" fill="rgb(112,171,255)"/>
<circle cx="888.0" cy="20.5" r="1.0" fill="rgb(112,171,255)"/>
<circle cx="933.7" cy="9.1" r="1.0" fill="rgb(112,171,255)"/>
<circle cx="1077.1" cy="34.6" r="1.2" fill="rgb(112,170,254)"/>
<circle cx="1096.7" cy="53.4" r="1.4" fill="rgb(118,155,251)"/>
<circle cx="1040.2" cy="10.7" r="1.4" fill="rgb(112,171,255)"/>
<circle cx="1062.3" cy="23.5" r="1.4" fill="rgb(112,171,255)"/>
<circle cx="1099.1" cy="18.0" r="1.1" fill="rgb(112,171,255)"/>
<circle cx="1040.2" cy="34.8" r="1.1" fill="rgb(112,171,255)"/>
<circle cx="947.8" cy="42.1" r="1.1" fill="rgb(112,171,255)"/>
<circle cx="884.9" cy="43.5" r="0.7" fill="rgb(112,171,255)"/>
<circle cx="1016.1" cy="51.4" r="0.8" fill="rgb(112,171,255)"/>
<circle cx="908.9" cy="26.5" r="0.7" fill="rgb(112,171,255)"/>
<circle cx="1095.3" cy="19.7" r="0.9" fill="rgb(112,171,255)"/>
<circle cx="973.7" cy="28.1" r="1.2" fill="rgb(112,171,255)"/>
<circle cx="1096.9" cy="0.8" r="0.9" fill="rgb(112,171,255)"/>
<circle cx="786.8" cy="10.5" r="0.6" fill="rgb(112,171,255)"/>
<circle cx="1148.3" cy="9.7" r="1.4" fill="rgb(112,171,255)"/>
<circle cx="929.2" cy="30.2" r="1.0" fill="rgb(112,171,255)"/>
<circle cx="1094.5" cy="2.5" r="1.4" fill="rgb(112,171,255)"/>
<circle cx="1009.3" cy="34.8" r="1.0" fill="rgb(112,171,255)"/>
<circle cx="1036.9" cy="18.6" r="1.0" fill="rgb(112,171,255)"/>
<circle cx="945.5" cy="21.2" r="1.0" fill="rgb(112,171,255)"/>
<circle cx="1098.3" cy="9.4" r="1.4" fill="rgb(112,171,255)"/>
<circle cx="863.6" cy="38.1" r="0.8" fill="rgb(112,171,255)"/>
<circle cx="791.9" cy="24.5" r="0.6" fill="rgb(112,171,255)"/>
<circle cx="1076.7" cy="21.3" r="1.0" fill="rgb(112,171,255)"/>
<circle cx="985.0" cy="46.3" r="0.7" fill="rgb(112,171,255)"/>
<circle cx="929.6" cy="38.0" r="1.0" fill="rgb(112,171,255)"/>
<circle cx="1021.8" cy="0.4" r="1.4" fill="rgb(112,171,255)"/>
<circle cx="1058.7" cy="53.6" r="1.3" fill="rgb(112,171,255)"/>
<circle cx="843.7" cy="-0.6" r="0.9" fill="rgb(112,171,255)"/>
<circle cx="978.6" cy="26.2" r="0.9" fill="rgb(112,171,255)"/>
<circle cx="1105.9" cy="5.1" r="1.2" fill="rgb(112,171,255)"/>
<circle cx="771.2" cy="23.3" r="0.7" fill="rgb(112,171,255)"/>
<circle cx="823.1" cy="16.8" r="0.6" fill="rgb(112,171,255)"/>
<circle cx="980.2" cy="30.5" r="0.9" fill="rgb(112,171,255)"/>
<circle cx="847.3" cy="32.8" r="0.8" fill="rgb(112,171,255)"/>
<circle cx="972.1" cy="53.6" r="1.0" fill="rgb(112,171,255)"/>
<circle cx="1005.8" cy="42.8" r="1.0" fill="rgb(112,171,255)"/>
<circle cx="1072.3" cy="10.8" r="1.4" fill="rgb(112,171,255)"/>
<circle cx="1100.7" cy="7.1" r="1.4" fill="rgb(112,171,255)"/>
<circle cx="907.8" cy="23.2" r="0.8" fill="rgb(112,171,255)"/>
<circle cx="1117.9" cy="50.6" r="1.3" fill="rgb(123,144,248)"/>
<circle cx="1093.6" cy="12.4" r="0.9" fill="rgb(112,171,255)"/>
<circle cx="945.8" cy="41.0" r="0.9" fill="rgb(112,171,255)"/>
<circle cx="1146.2" cy="24.9" r="1.5" fill="rgb(112,171,255)"/>
<circle cx="1105.8" cy="19.1" r="1.3" fill="rgb(112,171,255)"/>
<circle cx="1111.4" cy="49.9" r="1.5" fill="rgb(121,148,249)"/>
<circle cx="1048.5" cy="24.2" r="0.9" fill="rgb(112,171,255)"/>
<circle cx="1068.0" cy="38.9" r="1.5" fill="rgb(112,171,255)"/>
<circle cx="999.6" cy="18.5" r="0.8" fill="rgb(112,171,255)"/>
<circle cx="1142.8" cy="21.2" r="1.2" fill="rgb(112,171,255)"/>
<circle cx="962.5" cy="21.8" r="0.9" fill="rgb(112,171,255)"/>
<circle cx="970.9" cy="9.6" r="0.8" fill="rgb(112,171,255)"/>
<circle cx="960.4" cy="27.8" r="0.7" fill="rgb(112,171,255)"/>
<circle cx="1013.7" cy="36.6" r="1.3" fill="rgb(112,171,255)"/>
<circle cx="1076.2" cy="14.9" r="1.2" fill="rgb(112,171,255)"/>
<circle cx="1008.3" cy="10.6" r="1.0" fill="rgb(112,171,255)"/>
<circle cx="901.0" cy="29.5" r="1.1" fill="rgb(112,171,255)"/>
<circle cx="1085.7" cy="-1.3" r="1.4" fill="rgb(112,171,255)"/>
<circle cx="1060.9" cy="38.3" r="0.9" fill="rgb(112,171,255)"/>
<circle cx="1074.3" cy="53.2" r="1.5" fill="rgb(112,171,255)"/>
<circle cx="1038.8" cy="9.1" r="1.0" fill="rgb(112,171,255)"/>
<circle cx="1132.2" cy="-1.3" r="1.1" fill="rgb(112,171,255)"/>
<circle cx="977.1" cy="23.0" r="1.0" fill="rgb(112,171,255)"/>
<circle cx="1057.4" cy="38.5" r="1.4" fill="rgb(112,171,255)"/>
<circle cx="1064.4" cy="29.5" r="1.0" fill="rgb(112,171,255)"/>
<circle cx="944.3" cy="35.3" r="1.0" fill="rgb(112,171,255)"/>
<circle cx="914.3" cy="53.0" r="1.0" fill="rgb(112,171,255)"/>
<circle cx="1093.0" cy="5.1" r="1.4" fill="rgb(112,171,255)"/>
<circle cx="1136.2" cy="47.9" r="1.3" fill="rgb(126,137,246)"/>
<circle cx="1061.3" cy="38.5" r="1.2" fill="rgb(112,171,255)"/>
<circle cx="908.3" cy="40.0" r="1.1" fill="rgb(112,171,255)"/>
<circle cx="1092.3" cy="35.9" r="1.5" fill="rgb(113,166,253)"/>
<circle cx="1128.2" cy="51.6" r="1.4" fill="rgb(126,136,246)"/>
<circle cx="1038.3" cy="31.9" r="1.4" fill="rgb(112,171,255)"/>
<circle cx="1147.9" cy="39.4" r="1.0" fill="rgb(122,146,248)"/>
<circle cx="1084.9" cy="39.0" r="1.3" fill="rgb(113,167,254)"/>
<circle cx="942.1" cy="25.5" r="1.0" fill="rgb(112,171,255)"/>
<circle cx="1104.9" cy="26.6" r="1.5" fill="rgb(112,170,254)"/>
<circle cx="1058.0" cy="7.4" r="1.3" fill="rgb(112,171,255)"/>
<circle cx="1069.9" cy="52.8" r="0.9" fill="rgb(112,171,255)"/>
<circle cx="1050.3" cy="30.1" r="1.1" fill="rgb(112,171,255)"/>
<circle cx="892.3" cy="52.4" r="0.6" fill="rgb(112,171,255)"/>
<circle cx="982.6" cy="18.6" r="0.7" fill="rgb(112,171,255)"/>
<circle cx="1098.3" cy="50.6" r="1.2" fill="rgb(118,156,251)"/>
<circle cx="1083.0" cy="11.5" r="1.3" fill="rgb(112,171,255)"/>
<circle cx="1066.7" cy="24.3" r="0.9" fill="rgb(112,171,255)"/>
<circle cx="1033.2" cy="23.7" r="0.8" fill="rgb(112,171,255)"/>
<circle cx="1122.4" cy="32.5" r="1.3" fill="rgb(115,163,253)"/>
<circle cx="1039.4" cy="4.8" r="1.0" fill="rgb(112,171,255)"/>
<circle cx="874.3" cy="31.9" r="0.8" fill="rgb(112,171,255)"/>
<circle cx="995.5" cy="33.7" r="0.7" fill="rgb(112,171,255)"/>
<circle cx="896.3" cy="13.2" r="1.1" fill="rgb(112,171,255)"/>
<circle cx="955.9" cy="9.6" r="0.9" fill="rgb(112,171,255)"/>
<circle cx="1019.4" cy="28.4" r="1.2" fill="rgb(112,171,255)"/>
<circle cx="1008.1" cy="4.4" r="0.8" fill="rgb(112,171,255)"/>
<circle cx="980.2" cy="22.1" r="1.3" fill="rgb(112,171,255)"/>
<circle cx="1048.9" cy="17.1" r="1.4" fill="rgb(112,171,255)"/>
<circle cx="1019.5" cy="13.8" r="0.8" fill="rgb(112,171,255)"/>
<circle cx="1143.8" cy="0.4" r="1.1" fill="rgb(112,171,255)"/>
<circle cx="1009.4" cy="26.6" r="1.3" fill="rgb(112,171,255)"/>
<circle cx="1060.6" cy="5.2" r="1.4" fill="rgb(112,171,255)"/>
<circle cx="1065.6" cy="20.9" r="1.2" fill="rgb(112,171,255)"/>
<circle cx="1068.1" cy="2.9" r="1.4" fill="rgb(112,171,255)"/>
<circle cx="1098.8" cy="16.0" r="1.2" fill="rgb(112,171,255)"/>
<circle cx="1066.4" cy="47.3" r="0.9" fill="rgb(112,171,255)"/>
<circle cx="1052.2" cy="36.8" r="1.0" fill="rgb(112,171,255)"/>
<circle cx="1073.0" cy="17.0" r="1.1" fill="rgb(112,171,255)"/>
<circle cx="1045.7" cy="47.4" r="1.2" fill="rgb(112,171,255)"/>
<circle cx="967.7" cy="18.3" r="1.2" fill="rgb(112,171,255)"/>
<circle cx="1068.4" cy="15.1" r="0.9" fill="rgb(112,171,255)"/>
<circle cx="908.2" cy="29.2" r="1.1" fill="rgb(112,171,255)"/>
<circle cx="1121.6" cy="0.9" r="1.0" fill="rgb(112,171,255)"/>
<circle cx="1109.3" cy="39.9" r="1.2" fill="rgb(117,158,251)"/>
<circle cx="1101.4" cy="36.3" r="1.2" fill="rgb(114,164,253)"/>
<circle cx="940.7" cy="45.6" r="0.9" fill="rgb(112,171,255)"/>
<circle cx="1032.7" cy="44.1" r="1.4" fill="rgb(112,171,255)"/>
<circle cx="1005.9" cy="0.5" r="0.8" fill="rgb(112,171,255)"/>
<circle cx="973.7" cy="16.0" r="1.0" fill="rgb(112,171,255)"/>
<circle cx="969.0" cy="22.9" r="1.0" fill="rgb(112,171,255)"/>
<circle cx="1038.0" cy="44.3" r="0.8" fill="rgb(112,171,255)"/>
<circle cx="830.9" cy="10.4" r="0.7" fill="rgb(112,171,255)"/>
<circle cx="1042.4" cy="53.1" r="0.8" fill="rgb(112,171,255)"/>
<circle cx="1112.5" cy="16.4" r="1.0" fill="rgb(112,171,255)"/>
<circle cx="1143.4" cy="50.5" r="1.1" fill="rgb(129,128,244)"/>
<circle cx="1025.6" cy="17.5" r="0.8" fill="rgb(112,171,255)"/>
<circle cx="1149.1" cy="42.8" r="1.5" fill="rgb(124,140,247)"/>
<circle cx="1137.6" cy="49.9" r="1.1" fill="rgb(127,133,245)"/>
<circle cx="969.2" cy="45.5" r="1.2" fill="rgb(112,171,255)"/>
<circle cx="915.9" cy="-1.8" r="1.0" fill="rgb(112,171,255)"/>
<circle cx="1093.3" cy="47.4" r="0.8" fill="rgb(116,160,252)"/>
<circle cx="1049.2" cy="31.5" r="0.8" fill="rgb(112,171,255)"/>
<circle cx="1142.1" cy="9.7" r="1.4" fill="rgb(112,171,255)"/>
<circle cx="1144.3" cy="16.2" r="1.2" fill="rgb(112,171,255)"/>
<circle cx="1014.6" cy="18.7" r="1.1" fill="rgb(112,171,255)"/>
<circle cx="1107.6" cy="53.7" r="1.1" fill="rgb(121,148,249)"/>
<circle cx="1007.4" cy="46.5" r="0.9" fill="rgb(112,171,255)"/>
<circle cx="1143.5" cy="1.7" r="1.2" fill="rgb(112,171,255)"/>
<circle cx="1014.6" cy="-1.9" r="0.8" fill="rgb(112,171,255)"/>
<circle cx="994.2" cy="28.3" r="1.2" fill="rgb(112,171,255)"/>
<circle cx="1101.7" cy="26.0" r="1.0" fill="rgb(112,170,254)"/>
<circle cx="989.9" cy="43.3" r="1.2" fill="rgb(112,171,255)"/>
<circle cx="1015.9" cy="33.3" r="0.9" fill="rgb(112,171,255)"/>
<circle cx="1117.6" cy="27.8" r="1.1" fill="rgb(112,169,254)"/>
<circle cx="1110.2" cy="43.6" r="1.1" fill="rgb(118,155,251)"/>
<circle cx="1063.6" cy="42.3" r="0.8" fill="rgb(112,171,255)"/>
<circle cx="789.3" cy="16.2" r="0.9" fill="rgb(112,171,255)"/>
<circle cx="1120.1" cy="51.9" r="1.4" fill="rgb(124,141,247)"/>
<circle cx="1145.3" cy="1.4" r="1.0" fill="rgb(112,171,255)"/>
<circle cx="1042.3" cy="30.1" r="1.1" fill="rgb(112,171,255)"/>
<circle cx="1039.9" cy="32.5" r="1.2" fill="rgb(112,171,255)"/>
<circle cx="1078.6" cy="32.7" r="1.2" fill="rgb(112,170,254)"/>
<circle cx="901.8" cy="13.1" r="1.1" fill="rgb(112,171,255)"/>
<circle cx="999.2" cy="50.2" r="0.9" fill="rgb(112,171,255)"/>
<circle cx="1062.0" cy="18.5" r="1.4" fill="rgb(112,171,255)"/>
<circle cx="1064.9" cy="5.1" r="0.9" fill="rgb(112,171,255)"/>
<circle cx="1009.8" cy="5.3" r="1.0" fill="rgb(112,171,255)"/>
<circle cx="887.5" cy="16.1" r="1.0" fill="rgb(112,171,255)"/>
<circle cx="1042.7" cy="25.6" r="0.9" fill="rgb(112,171,255)"/>
<circle cx="1109.2" cy="23.6" r="1.4" fill="rgb(112,171,255)"/>
<circle cx="1105.5" cy="4.8" r="1.2" fill="rgb(112,171,255)"/>
<circle cx="895.0" cy="1.9" r="1.1" fill="rgb(112,171,255)"/>
<circle cx="1094.6" cy="48.7" r="1.4" fill="rgb(116,159,252)"/>
<circle cx="975.4" cy="35.7" r="0.9" fill="rgb(112,171,255)"/>
<circle cx="1009.0" cy="2.9" r="1.1" fill="rgb(112,171,255)"/>
<circle cx="957.2" cy="-0.5" r="1.0" fill="rgb(112,171,255)"/>
<circle cx="1144.9" cy="41.1" r="1.4" fill="rgb(123,144,248)"/>
<circle cx="1125.6" cy="23.0" r="0.9" fill="rgb(112,171,255)"/>
<circle cx="1137.8" cy="13.8" r="1.1" fill="rgb(112,171,255)"/>
<circle cx="1135.9" cy="22.6" r="1.6" fill="rgb(112,171,255)"/>
<circle cx="959.1" cy="30.6" r="1.1" fill="rgb(112,171,255)"/>
<circle cx="1116.5" cy="18.7" r="1.5" fill="rgb(112,171,255)"/>
<circle cx="1142.1" cy="4.5" r="1.5" fill="rgb(112,171,255)"/>
<circle cx="1032.2" cy="42.4" r="1.3" fill="rgb(112,171,255)"/>
<circle cx="1105.5" cy="24.8" r="0.9" fill="rgb(112,171,255)"/>
<circle cx="943.6" cy="0.8" r="1.2" fill="rgb(112,171,255)"/>
<circle cx="975.3" cy="46.3" r="1.0" fill="rgb(112,171,255)"/>
<circle cx="1118.0" cy="38.5" r="1.3" fill="rgb(117,157,251)"/>
<circle cx="1118.2" cy="53.2" r="1.1" fill="rgb(124,141,247)"/>
<circle cx="1111.0" cy="5.8" r="1.5" fill="rgb(112,171,255)"/>
<circle cx="1104.4" cy="23.2" r="1.2" fill="rgb(112,171,255)"/>
<circle cx="952.2" cy="42.0" r="0.8" fill="rgb(112,171,255)"/>
<circle cx="1143.7" cy="-1.3" r="0.9" fill="rgb(112,171,255)"/>
<circle cx="1023.5" cy="4.7" r="0.8" fill="rgb(112,171,255)"/>
<circle cx="1137.2" cy="46.4" r="1.5" fill="rgb(125,138,246)"/>
<circle cx="985.6" cy="4.6" r="0.8" fill="rgb(112,171,255)"/>
<circle cx="970.5" cy="32.1" r="1.1" fill="rgb(112,171,255)"/>
<circle cx="1066.5" cy="28.6" r="1.4" fill="rgb(112,171,255)"/>
<circle cx="1090.7" cy="18.6" r="1.2" fill="rgb(112,171,255)"/>
<circle cx="1144.8" cy="33.8" r="1.3" fill="rgb(117,157,251)"/>
<circle cx="998.2" cy="14.2" r="1.0" fill="rgb(112,171,255)"/>
<circle cx="944.8" cy="17.9" r="1.1" fill="rgb(112,171,255)"/>
<circle cx="1109.8" cy="50.5" r="0.9" fill="rgb(121,149,249)"/>
<circle cx="1020.0" cy="7.0" r="1.2" fill="rgb(112,171,255)"/>
<circle cx="1019.1" cy="30.8" r="0.9" fill="rgb(112,171,255)"/>
<circle cx="1116.5" cy="24.3" r="1.0" fill="rgb(112,171,255)"/>
<circle cx="1120.1" cy="40.7" r="0.9" fill="rgb(119,154,250)"/>
<circle cx="1082.5" cy="31.7" r="0.9" fill="rgb(112,169,254)"/>
<circle cx="1110.9" cy="28.5" r="1.3" fill="rgb(112,168,254)"/>
<circle cx="1071.0" cy="2.9" r="1.3" fill="rgb(112,171,255)"/>
<circle cx="1028.9" cy="-1.6" r="1.1" fill="rgb(112,171,255)"/>
<circle cx="1110.9" cy="41.0" r="1.5" fill="rgb(117,157,251)"/>
<circle cx="1031.0" cy="23.8" r="1.0" fill="rgb(112,171,255)"/>
<circle cx="1033.0" cy="10.8" r="1.1" fill="rgb(112,171,255)"/>
<circle cx="1009.8" cy="1.7" r="1.3" fill="rgb(112,171,255)"/>
<circle cx="959.2" cy="25.9" r="0.8" fill="rgb(112,171,255)"/>
<circle cx="1109.8" cy="52.3" r="1.2" fill="rgb(121,147,249)"/>
<circle cx="1005.5" cy="34.7" r="0.8" fill="rgb(112,171,255)"/>
<circle cx="1108.4" cy="18.4" r="1.5" fill="rgb(112,171,255)"/>
<circle cx="820.0" cy="33.6" r="0.8" fill="rgb(112,171,255)"/>
<circle cx="1128.4" cy="38.1" r="1.5" fill="rgb(118,154,250)"/>
<circle cx="1092.1" cy="41.8" r="1.5" fill="rgb(114,164,253)"/>
<circle cx="1132.4" cy="13.5" r="1.2" fill="rgb(112,171,255)"/>
<circle cx="1067.5" cy="22.2" r="1.4" fill="rgb(112,171,255)"/>
<circle cx="1006.4" cy="6.2" r="1.0" fill="rgb(112,171,255)"/>
<circle cx="1049.7" cy="22.4" r="1.0" fill="rgb(112,171,255)"/>
<circle cx="884.0" cy="38.4" r="1.0" fill="rgb(112,171,255)"/>
<circle cx="915.9" cy="2.8" r="0.7" fill="rgb(112,171,255)"/>
<circle cx="1019.7" cy="30.4" r="1.3" fill="rgb(112,171,255)"/>
<circle cx="1009.2" cy="22.7" r="1.0" fill="rgb(112,171,255)"/>
<circle cx="1083.7" cy="-0.6" r="1.5" fill="rgb(112,171,255)"/>
<circle cx="918.9" cy="21.8" r="0.9" fill="rgb(112,171,255)"/>
<circle cx="975.6" cy="47.1" r="1.0" fill="rgb(112,171,255)"/>
<circle cx="1005.6" cy="29.1" r="0.8" fill="rgb(112,171,255)"/>
<circle cx="1125.6" cy="19.9" r="1.2" fill="rgb(112,171,255)"/>
<circle cx="977.6" cy="17.4" r="0.8" fill="rgb(112,171,255)"/>
<circle cx="1122.8" cy="45.1" r="1.3" fill="rgb(121,147,249)"/>
<circle cx="966.5" cy="9.2" r="1.1" fill="rgb(112,171,255)"/>
<circle cx="806.7" cy="29.6" r="0.5" fill="rgb(112,171,255)"/>
<circle cx="1146.4" cy="35.0" r="0.9" fill="rgb(118,154,250)"/>
<circle cx="828.9" cy="20.7" r="0.8" fill="rgb(112,171,255)"/>
<circle cx="1053.1" cy="31.6" r="1.4" fill="rgb(112,171,255)"/>
<circle cx="1137.2" cy="51.2" r="1.5" fill="rgb(128,131,245)"/>
<circle cx="1101.7" cy="10.6" r="1.4" fill="rgb(112,171,255)"/>
<circle cx="1120.7" cy="40.6" r="1.1" fill="rgb(119,154,250)"/>
<circle cx="1100.8" cy="46.5" r="1.4" fill="rgb(117,157,251)"/>
<circle cx="1038.0" cy="23.1" r="1.3" fill="rgb(112,171,255)"/>
<circle cx="1011.5" cy="25.6" r="1.3" fill="rgb(112,171,255)"/>
<circle cx="989.0" cy="8.2" r="1.1" fill="rgb(112,171,255)"/>
<circle cx="1072.2" cy="1.5" r="1.0" fill="rgb(112,171,255)"/>
<circle cx="1045.1" cy="40.8" r="1.2" fill="rgb(112,171,255)"/>
<circle cx="1048.4" cy="-1.6" r="1.0" fill="rgb(112,171,255)"/>
<circle cx="1106.9" cy="29.6" r="1.0" fill="rgb(113,168,254)"/>
<circle cx="975.0" cy="44.3" r="1.2" fill="rgb(112,171,255)"/>
<circle cx="948.2" cy="33.4" r="1.1" fill="rgb(112,171,255)"/>
<circle cx="935.5" cy="40.0" r="0.9" fill="rgb(112,171,255)"/>
<circle cx="850.2" cy="29.0" r="1.0" fill="rgb(112,171,255)"/>
<circle cx="1113.0" cy="32.9" r="1.4" fill="rgb(114,164,253)"/>
<circle cx="1092.7" cy="47.4" r="1.4" fill="rgb(116,161,252)"/>
<circle cx="1147.7" cy="51.7" r="1.4" fill="rgb(131,123,243)"/>
<circle cx="948.2" cy="10.1" r="1.2" fill="rgb(112,171,255)"/>
<circle cx="824.3" cy="24.2" r="0.7" fill="rgb(112,171,255)"/>
<circle cx="1067.2" cy="46.6" r="1.4" fill="rgb(112,171,255)"/>
<circle cx="963.3" cy="36.1" r="0.7" fill="rgb(112,171,255)"/>
<circle cx="1043.4" cy="29.5" r="0.9" fill="rgb(112,171,255)"/>
<circle cx="934.8" cy="-1.2" r="0.9" fill="rgb(112,171,255)"/>
<circle cx="1047.2" cy="42.5" r="1.1" fill="rgb(112,171,255)"/>
<circle cx="1146.8" cy="32.6" r="1.6" fill="rgb(116,159,252)"/>
<circle cx="1101.8" cy="36.6" r="1.5" fill="rgb(115,163,253)"/>
<circle cx="1058.4" cy="35.7" r="1.1" fill="rgb(112,171,255)"/>
<circle cx="1105.0" cy="13.8" r="1.0" fill="rgb(112,171,255)"/>
<circle cx="946.0" cy="-1.1" r="0.9" fill="rgb(112,171,255)"/>
<circle cx="1019.5" cy="6.7" r="1.0" fill="rgb(112,171,255)"/>
<circle cx="1067.9" cy="47.2" r="1.3" fill="rgb(112,171,255)"/>
<circle cx="1085.9" cy="34.5" r="1.4" fill="rgb(112,168,254)"/>
<circle cx="1149.1" cy="39.1" r="1.4" fill="rgb(122,146,248)"/>
<circle cx="1069.5" cy="15.9" r="1.3" fill="rgb(112,171,255)"/>
<circle cx="1054.2" cy="7.8" r="0.8" fill="rgb(112,171,255)"/>
<circle cx="1049.2" cy="47.2" r="0.9" fill="rgb(112,171,255)"/>
<circle cx="1007.8" cy="28.7" r="0.9" fill="rgb(112,171,255)"/>
<circle cx="913.6" cy="52.9" r="1.0" fill="rgb(112,171,255)"/>
<circle cx="1073.1" cy="40.0" r="1.0" fill="rgb(112,171,255)"/>
<circle cx="947.9" cy="40.8" r="0.8" fill="rgb(112,171,255)"/>
<circle cx="803.5" cy="38.6" r="0.7" fill="rgb(112,171,255)"/>
<circle cx="1020.4" cy="9.0" r="1.2" fill="rgb(112,171,255)"/>
<circle cx="1107.9" cy="18.2" r="1.3" fill="rgb(112,171,255)"/>
<circle cx="1119.6" cy="34.4" r="1.4" fill="rgb(115,161,252)"/>
<circle cx="1060.3" cy="19.7" r="1.4" fill="rgb(112,171,255)"/>
<circle cx="989.8" cy="34.6" r="0.8" fill="rgb(112,171,255)"/>
<circle cx="978.1" cy="31.5" r="0.8" fill="rgb(112,171,255)"/>
<circle cx="1002.6" cy="48.9" r="1.2" fill="rgb(112,171,255)"/>
<circle cx="1095.6" cy="2.3" r="1.4" fill="rgb(112,171,255)"/>
<circle cx="880.4" cy="9.7" r="0.7" fill="rgb(112,171,255)"/>
<circle cx="955.4" cy="-0.3" r="1.1" fill="rgb(112,171,255)"/>
<circle cx="892.7" cy="54.0" r="0.7" fill="rgb(112,171,255)"/>
<circle cx="1073.1" cy="39.2" r="1.3" fill="rgb(112,171,255)"/>
<circle cx="821.8" cy="32.6" r="0.6" fill="rgb(112,171,255)"/>
<circle cx="1084.6" cy="50.7" r="1.4" fill="rgb(114,164,253)"/>
<circle cx="1058.4" cy="6.4" r="1.1" fill="rgb(112,171,255)"/>
<circle cx="988.6" cy="36.5" r="1.1" fill="rgb(112,171,255)"/>
<circle cx="1133.9" cy="35.7" r="1.2" fill="rgb(118,156,251)"/>
<circle cx="931.7" cy="5.0" r="0.8" fill="rgb(112,171,255)"/>
<circle cx="1107.6" cy="37.8" r="1.0" fill="rgb(116,161,252)"/>
<circle cx="1131.9" cy="27.5" r="1.0" fill="rgb(112,168,254)"/>
<circle cx="939.6" cy="21.6" r="0.9" fill="rgb(112,171,255)"/>
<circle cx="1085.9" cy="4.6" r="0.8" fill="rgb(112,171,255)"/>
<circle cx="1121.6" cy="20.7" r="0.9" fill="rgb(112,171,255)"/>
<circle cx="1048.8" cy="27.1" r="1.4" fill="rgb(112,171,255)"/>
<circle cx="1148.8" cy="5.8" r="1.5" fill="rgb(112,171,255)"/>
<circle cx="877.8" cy="50.0" r="0.7" fill="rgb(112,171,255)"/>
<circle cx="867.0" cy="45.5" r="0.9" fill="rgb(112,171,255)"/>
<circle cx="975.8" cy="5.3" r="0.7" fill="rgb(112,171,255)"/>
<circle cx="1119.7" cy="40.2" r="1.5" fill="rgb(118,154,250)"/>
<circle cx="1141.0" cy="9.6" r="1.0" fill="rgb(112,171,255)"/>
<circle cx="1057.3" cy="27.7" r="1.2" fill="rgb(112,171,255)"/>
<circle cx="1129.2" cy="0.8" r="1.0" fill="rgb(112,171,255)"/>
<circle cx="1045.8" cy="31.4" r="0.8" fill="rgb(112,171,255)"/>
<circle cx="1044.7" cy="23.3" r="1.1" fill="rgb(112,171,255)"/>
<circle cx="956.2" cy="14.5" r="1.0" fill="rgb(112,171,255)"/>
<circle cx="1034.2" cy="36.9" r="1.3" fill="rgb(112,171,255)"/>
<circle cx="967.3" cy="27.3" r="1.0" fill="rgb(112,171,255)"/>
<circle cx="1136.2" cy="40.3" r="1.3" fill="rgb(121,148,249)"/>
<circle cx="1019.5" cy="48.6" r="1.1" fill="rgb(112,171,255)"/>
<circle cx="1039.5" cy="21.1" r="1.0" fill="rgb(112,171,255)"/>
<circle cx="980.7" cy="23.7" r="0.9" fill="rgb(112,171,255)"/>
<circle cx="997.1" cy="1.0" r="1.3" fill="rgb(112,171,255)"/>
<circle cx="1103.1" cy="2.0" r="0.9" fill="rgb(112,171,255)"/>
<circle cx="1102.9" cy="5.8" r="1.5" fill="rgb(112,171,255)"/>
<circle cx="1025.9" cy="40.7" r="1.1" fill="rgb(112,171,255)"/>
<circle cx="1149.3" cy="32.8" r="1.1" fill="rgb(117,158,251)"/>
<circle cx="1072.9" cy="52.2" r="0.9" fill="rgb(112,171,255)"/>
<circle cx="1148.5" cy="21.9" r="1.1" fill="rgb(112,171,255)"/>
<circle cx="1090.6" cy="20.4" r="1.4" fill="rgb(112,171,255)"/>
<circle cx="958.0" cy="19.7" r="1.0" fill="rgb(112,171,255)"/>
<circle cx="866.1" cy="50.2" r="0.8" fill="rgb(112,171,255)"/>
<circle cx="1069.6" cy="25.7" r="1.1" fill="rgb(112,171,255)"/>
<circle cx="1041.8" cy="39.2" r="1.3" fill="rgb(112,171,255)"/>
<circle cx="1034.7" cy="40.2" r="0.8" fill="rgb(112,171,255)"/>
<circle cx="1003.8" cy="53.8" r="0.7" fill="rgb(112,171,255)"/>
<circle cx="1080.5" cy="47.9" r="1.5" fill="rgb(113,167,254)"/>
<circle cx="969.4" cy="34.0" r="1.1" fill="rgb(112,171,255)"/>
<circle cx="1098.4" cy="19.4" r="1.0" fill="rgb(112,171,255)"/>
<circle cx="923.3" cy="33.9" r="0.6" fill="rgb(112,171,255)"/>
<circle cx="962.1" cy="16.2" r="1.1" fill="rgb(112,171,255)"/>
<circle cx="964.9" cy="48.8" r="1.3" fill="rgb(112,171,255)"/>
<circle cx="1107.1" cy="31.4" r="1.3" fill="rgb(113,166,253)"/>
<circle cx="1036.8" cy="5.5" r="1.2" fill="rgb(112,171,255)"/>
<circle cx="1135.2" cy="17.3" r="1.2" fill="rgb(112,171,255)"/>
<circle cx="977.1" cy="41.3" r="1.0" fill="rgb(112,171,255)"/>
<circle cx="1064.5" cy="20.1" r="0.9" fill="rgb(112,171,255)"/>
<circle cx="928.7" cy="51.2" r="0.9" fill="rgb(112,171,255)"/>
<circle cx="1045.1" cy="12.7" r="1.2" fill="rgb(112,171,255)"/>
<circle cx="942.3" cy="18.2" r="1.0" fill="rgb(112,171,255)"/>
<circle cx="1057.0" cy="4.6" r="1.2" fill="rgb(112,171,255)"/>
<circle cx="1142.7" cy="46.9" r="1.3" fill="rgb(126,135,246)"/>
<circle cx="1029.1" cy="43.8" r="1.1" fill="rgb(112,171,255)"/>
<circle cx="962.8" cy="30.7" r="1.2" fill="rgb(112,171,255)"/>
<circle cx="995.3" cy="49.2" r="0.9" fill="rgb(112,171,255)"/>
<circle cx="938.0" cy="47.9" r="1.1" fill="rgb(112,171,255)"/>
<circle cx="895.7" cy="12.3" r="0.7" fill="rgb(112,171,255)"/>
<circle cx="1138.9" cy="13.1" r="1.5" fill="rgb(112,171,255)"/>
<circle cx="1038.5" cy="34.7" r="1.2" fill="rgb(112,171,255)"/>
<circle cx="1052.3" cy="8.8" r="0.8" fill="rgb(112,171,255)"/>
<circle cx="1047.3" cy="28.6" r="0.9" fill="rgb(112,171,255)"/>
<circle cx="1084.7" cy="39.9" r="1.2" fill="rgb(113,167,254)"/>
<circle cx="1144.1" cy="49.9" r="0.9" fill="rgb(129,129,244)"/>
<circle cx="1109.7" cy="0.6" r="1.3" fill="rgb(112,171,255)"/>
<circle cx="1025.4" cy="2.7" r="1.2" fill="rgb(112,171,255)"/>
<circle cx="1082.8" cy="32.6" r="1.0" fill="rgb(112,169,254)"/>
<circle cx="1100.5" cy="1.0" r="1.2" fill="rgb(112,171,255)"/>
<circle cx="916.3" cy="-1.9" r="1.1" fill="rgb(112,171,255)"/>
<circle cx="1051.5" cy="9.0" r="0.8" fill="rgb(112,171,255)"/>
<circle cx="972.6" cy="0.4" r="1.1" fill="rgb(112,171,255)"/>
<circle cx="967.6" cy="31.4" r="0.9" fill="rgb(112,171,255)"/>
<circle cx="1115.5" cy="7.8" r="1.3" fill="rgb(112,171,255)"/>
<circle cx="1049.7" cy="38.0" r="0.9" fill="rgb(112,171,255)"/>
<circle cx="1045.8" cy="51.1" r="1.2" fill="rgb(112,171,255)"/>
<circle cx="810.0" cy="14.3" r="0.8" fill="rgb(112,171,255)"/>
<circle cx="963.8" cy="36.3" r="0.9" fill="rgb(112,171,255)"/>
<circle cx="1135.6" cy="52.1" r="1.6" fill="rgb(128,130,244)"/>
<circle cx="1052.7" cy="13.6" r="1.1" fill="rgb(112,171,255)"/>
<circle cx="985.9" cy="1.0" r="0.9" fill="rgb(112,171,255)"/>
<circle cx="1101.2" cy="40.0" r="1.1" fill="rgb(115,161,252)"/>
<circle cx="996.6" cy="47.5" r="0.8" fill="rgb(112,171,255)"/>
<circle cx="1049.2" cy="19.8" r="1.2" fill="rgb(112,171,255)"/>
<circle cx="972.9" cy="49.1" r="0.9" fill="rgb(112,171,255)"/>
<circle cx="1032.0" cy="49.1" r="0.8" fill="rgb(112,171,255)"/>
<circle cx="940.5" cy="22.9" r="0.8" fill="rgb(112,171,255)"/>
<circle cx="930.8" cy="14.2" r="1.0" fill="rgb(112,171,255)"/>
<circle cx="1103.7" cy="41.5" r="0.9" fill="rgb(116,159,252)"/>
<circle cx="900.2" cy="33.8" r="1.0" fill="rgb(112,171,255)"/>
<circle cx="1090.9" cy="12.7" r="1.1" fill="rgb(112,171,255)"/>
<circle cx="972.3" cy="32.6" r="1.2" fill="rgb(112,171,255)"/>
<circle cx="1002.5" cy="34.3" r="1.2" fill="rgb(112,171,255)"/>
<circle cx="1111.4" cy="35.6" r="1.2" fill="rgb(115,162,252)"/>
<circle cx="1107.9" cy="21.0" r="0.8" fill="rgb(112,171,255)"/>
<circle cx="1082.5" cy="24.2" r="0.8" fill="rgb(112,171,255)"/>
<circle cx="1002.1" cy="53.1" r="0.9" fill="rgb(112,171,255)"/>
<circle cx="1077.3" cy="27.9" r="1.1" fill="rgb(112,170,254)"/>
<circle cx="1082.1" cy="34.6" r="1.1" fill="rgb(112,169,254)"/>
<circle cx="1020.1" cy="27.9" r="0.8" fill="rgb(112,171,255)"/>
<circle cx="955.0" cy="38.5" r="1.2" fill="rgb(112,171,255)"/>
<circle cx="1046.7" cy="46.9" r="1.2" fill="rgb(112,171,255)"/>
<circle cx="931.5" cy="38.0" r="1.2" fill="rgb(112,171,255)"/>
<circle cx="876.2" cy="47.7" r="0.7" fill="rgb(112,171,255)"/>
<circle cx="1021.3" cy="5.5" r="1.1" fill="rgb(112,171,255)"/>
<circle cx="1079.2" cy="26.4" r="0.8" fill="rgb(112,170,254)"/>
<circle cx="1037.2" cy="13.3" r="1.1" fill="rgb(112,171,255)"/>
<circle cx="1119.2" cy="6.9" r="1.2" fill="rgb(112,171,255)"/>
<circle cx="1144.9" cy="36.2" r="1.2" fill="rgb(119,152,250)"/>
<circle cx="1107.4" cy="34.2" r="1.1" fill="rgb(114,164,253)"/>
<circle cx="1025.8" cy="19.8" r="1.0" fill="rgb(112,171,255)"/>
<circle cx="1136.5" cy="46.1" r="1.1" fill="rgb(125,139,247)"/>
<circle cx="1144.7" cy="29.8" r="0.9" fill="rgb(114,164,253)"/>
<circle cx="971.8" cy="50.0" r="1.2" fill="rgb(112,171,255)"/>
<circle cx="984.2" cy="41.4" r="1.2" fill="rgb(112,171,255)"/>
<circle cx="967.3" cy="39.5" r="0.7" fill="rgb(112,171,255)"/>
<circle cx="1052.8" cy="38.7" r="1.2" fill="rgb(112,171,255)"/>
<circle cx="1051.7" cy="36.1" r="1.4" fill="rgb(112,171,255)"/>
<circle cx="1147.3" cy="17.3" r="1.1" fill="rgb(112,171,255)"/>
<circle cx="940.8" cy="6.1" r="1.1" fill="rgb(112,171,255)"/>
<circle cx="891.7" cy="28.3" r="0.8" fill="rgb(112,171,255)"/>
<circle cx="1115.0" cy="10.9" r="0.9" fill="rgb(112,171,255)"/>
<circle cx="1006.7" cy="28.6" r="1.2" fill="rgb(112,171,255)"/>
<circle cx="1068.1" cy="40.6" r="1.1" fill="rgb(112,171,255)"/>
<circle cx="969.4" cy="41.5" r="1.2" fill="rgb(112,171,255)"/>
<circle cx="1028.0" cy="44.5" r="1.0" fill="rgb(112,171,255)"/>
<circle cx="1117.5" cy="5.9" r="1.4" fill="rgb(112,171,255)"/>
<circle cx="867.6" cy="11.7" r="0.9" fill="rgb(112,171,255)"/>
<circle cx="965.5" cy="9.9" r="1.1" fill="rgb(112,171,255)"/>
<circle cx="969.3" cy="13.2" r="1.1" fill="rgb(112,171,255)"/>
<circle cx="965.5" cy="22.3" r="1.0" fill="rgb(112,171,255)"/>
<circle cx="1056.9" cy="11.1" r="1.3" fill="rgb(112,171,255)"/>
<circle cx="831.7" cy="51.5" r="0.6" fill="rgb(112,171,255)"/>
<circle cx="1118.6" cy="9.3" r="1.2" fill="rgb(112,171,255)"/>
<circle cx="1027.4" cy="36.8" r="0.8" fill="rgb(112,171,255)"/>
<circle cx="1008.8" cy="-1.9" r="1.2" fill="rgb(112,171,255)"/>
<circle cx="1095.8" cy="2.9" r="1.1" fill="rgb(112,171,255)"/>
<circle cx="1116.2" cy="10.0" r="1.4" fill="rgb(112,171,255)"/>
<circle cx="1069.2" cy="29.9" r="0.8" fill="rgb(112,171,255)"/>
<circle cx="1076.0" cy="36.0" r="0.9" fill="rgb(112,170,254)"/>
<circle cx="974.1" cy="15.6" r="1.2" fill="rgb(112,171,255)"/>
<circle cx="891.1" cy="-1.8" r="0.9" fill="rgb(112,171,255)"/>
<circle cx="1062.5" cy="7.4" r="1.1" fill="rgb(112,171,255)"/>
<circle cx="1130.5" cy="52.5" r="1.1" fill="rgb(127,133,245)"/>
<circle cx="884.2" cy="11.0" r="0.9" fill="rgb(112,171,255)"/>
<circle cx="950.1" cy="17.7" r="0.8" fill="rgb(112,171,255)"/>
<circle cx="910.4" cy="30.1" r="1.0" fill="rgb(112,171,255)"/>
<circle cx="1065.7" cy="36.1" r="1.2" fill="rgb(112,171,255)"/>
<circle cx="1106.6" cy="3.6" r="1.5" fill="rgb(112,171,255)"/>
<circle cx="980.7" cy="20.4" r="0.7" fill="rgb(112,171,255)"/>
<circle cx="829.1" cy="32.5" r="0.8" fill="rgb(112,171,255)"/>
<circle cx="1075.3" cy="-1.9" r="1.1" fill="rgb(112,171,255)"/>
<circle cx="1149.4" cy="15.1" r="1.6" fill="rgb(112,171,255)"/>
<circle cx="1074.0" cy="29.0" r="0.9" fill="rgb(112,171,255)"/>
<circle cx="820.1" cy="11.9" r="0.8" fill="rgb(112,171,255)"/>
<circle cx="988.1" cy="0.5" r="1.0" fill="rgb(112,171,255)"/>
<circle cx="1119.1" cy="37.5" r="1.0" fill="rgb(117,158,251)"/>
<circle cx="1030.0" cy="41.2" r="1.3" fill="rgb(112,171,255)"/>
<circle cx="1104.9" cy="37.5" r="1.0" fill="rgb(115,162,252)"/>
<circle cx="901.9" cy="25.0" r="1.1" fill="rgb(112,171,255)"/>
<circle cx="957.8" cy="12.8" r="1.0" fill="rgb(112,171,255)"/>
<circle cx="1098.2" cy="35.2" r="1.0" fill="rgb(114,165,253)"/>
<circle cx="978.5" cy="21.3" r="0.7" fill="rgb(112,171,255)"/>
<circle cx="1094.9" cy="35.4" r="1.2" fill="rgb(113,166,253)"/>
<circle cx="1128.7" cy="19.4" r="1.1" fill="rgb(112,171,255)"/>
<circle cx="1147.6" cy="48.9" r="1.4" fill="rgb(129,129,244)"/>
<circle cx="1066.9" cy="13.9" r="1.3" fill="rgb(112,171,255)"/>
<circle cx="1122.2" cy="41.6" r="1.2" fill="rgb(119,152,250)"/>
<circle cx="1081.9" cy="43.2" r="1.1" fill="rgb(113,167,254)"/>
<circle cx="981.6" cy="-1.4" r="1.2" fill="rgb(112,171,255)"/>
<circle cx="956.3" cy="17.4" r="1.1" fill="rgb(112,171,255)"/>
<circle cx="1040.0" cy="17.0" r="0.9" fill="rgb(112,171,255)"/>
<circle cx="1072.0" cy="33.9" r="1.3" fill="rgb(112,171,255)"/>
<circle cx="972.4" cy="14.0" r="1.2" fill="rgb(112,171,255)"/>
<circle cx="897.4" cy="13.6" r="1.0" fill="rgb(112,171,255)"/>
<circle cx="915.4" cy="20.1" r="0.9" fill="rgb(112,171,255)"/>
<circle cx="1136.4" cy="26.9" r="1.5" fill="rgb(112,169,254)"/>
<circle cx="930.0" cy="42.9" r="0.9" fill="rgb(112,171,255)"/>
<circle cx="1145.1" cy="19.6" r="1.6" fill="rgb(112,171,255)"/>
<circle cx="1035.6" cy="23.7" r="0.9" fill="rgb(112,171,255)"/>
<circle cx="1061.0" cy="20.7" r="0.8" fill="rgb(112,171,255)"/>
<circle cx="912.9" cy="53.0" r="0.6" fill="rgb(112,171,255)"/>
<circle cx="1064.6" cy="46.3" r="1.2" fill="rgb(112,171,255)"/>
<circle cx="1110.4" cy="12.7" r="1.4" fill="rgb(112,171,255)"/>
<circle cx="1029.1" cy="1.0" r="1.3" fill="rgb(112,171,255)"/>
<circle cx="1003.1" cy="-0.3" r="1.2" fill="rgb(112,171,255)"/>
<circle cx="1082.9" cy="52.9" r="1.4" fill="rgb(114,165,253)"/>
<circle cx="944.8" cy="22.7" r="1.0" fill="rgb(112,171,255)"/>
<circle cx="1062.9" cy="10.5" r="1.3" fill="rgb(112,171,255)"/>
<circle cx="1126.9" cy="13.5" r="1.2" fill="rgb(112,171,255)"/>
<circle cx="1103.4" cy="43.3" r="1.3" fill="rgb(117,158,251)"/>
<circle cx="1000.0" cy="5.9" r="1.3" fill="rgb(112,171,255)"/>
<circle cx="876.3" cy="30.5" r="0.9" fill="rgb(112,171,255)"/>
<circle cx="1086.3" cy="52.6" r="1.2" fill="rgb(115,163,253)"/>
<circle cx="1034.7" cy="25.8" r="1.0" fill="rgb(112,171,255)"/>
<circle cx="1134.5" cy="22.3" r="1.3" fill="rgb(112,171,255)"/>
<circle cx="971.4" cy="13.0" r="1.3" fill="rgb(112,171,255)"/>
<circle cx="971.4" cy="46.9" r="0.9" fill="rgb(112,171,255)"/>
<circle cx="1117.5" cy="11.1" r="1.5" fill="rgb(112,171,255)"/>
<circle cx="1035.6" cy="22.0" r="1.2" fill="rgb(112,171,255)"/>
<circle cx="1093.3" cy="-0.6" r="1.5" fill="rgb(112,171,255)"/>
<circle cx="1034.2" cy="11.6" r="1.2" fill="rgb(112,171,255)"/>
<circle cx="1129.7" cy="3.3" r="1.2" fill="rgb(112,171,255)"/>
<circle cx="1143.7" cy="53.6" r="1.3" fill="rgb(131,123,243)"/>
<circle cx="950.2" cy="26.9" r="1.0" fill="rgb(112,171,255)"/>
<circle cx="959.1" cy="48.6" r="1.1" fill="rgb(112,171,255)"/>
<circle cx="985.9" cy="47.4" r="1.0" fill="rgb(112,171,255)"/>
<circle cx="1073.2" cy="12.3" r="1.4" fill="rgb(112,171,255)"/>
<circle cx="1005.9" cy="25.4" r="1.2" fill="rgb(112,171,255)"/>
<circle cx="1136.0" cy="35.8" r="1.2" fill="rgb(118,155,251)"/>
<circle cx="1148.2" cy="-1.9" r="1.0" fill="rgb(112,171,255)"/>
<circle cx="883.2" cy="26.1" r="0.8" fill="rgb(112,171,255)"/>
<circle cx="1084.7" cy="31.0" r="1.2" fill="rgb(112,169,254)"/>
<circle cx="774.0" cy="6.0" r="0.7" fill="rgb(112,171,255)"/>
<circle cx="1008.6" cy="39.1" r="0.8" fill="rgb(112,171,255)"/>
<circle cx="1070.9" cy="5.9" r="1.3" fill="rgb(112,171,255)"/>
<circle cx="1000.2" cy="0.2" r="1.2" fill="rgb(112,171,255)"/>
<circle cx="1087.3" cy="19.6" r="1.1" fill="rgb(112,171,255)"/>
<circle cx="1084.9" cy="40.3" r="1.0" fill="rgb(113,167,254)"/>
<circle cx="1104.4" cy="21.1" r="1.1" fill="rgb(112,171,255)"/>
<circle cx="797.3" cy="47.2" r="0.7" fill="rgb(112,171,255)"/>
<circle cx="1145.5" cy="46.1" r="1.5" fill="rgb(126,135,246)"/>
<circle cx="986.6" cy="52.5" r="1.3" fill="rgb(112,171,255)"/>
<circle cx="1009.5" cy="49.5" r="1.1" fill="rgb(112,171,255)"/>
<circle cx="1127.9" cy="0.4" r="1.0" fill="rgb(112,171,255)"/>
<circle cx="957.7" cy="8.5" r="0.8" fill="rgb(112,171,255)"/>
<circle cx="1138.5" cy="15.8" r="1.3" fill="rgb(112,171,255)"/>
<circle cx="1071.9" cy="40.8" r="1.4" fill="rgb(112,171,255)"/>
<circle cx="984.8" cy="33.6" r="0.8" fill="rgb(112,171,255)"/>
<circle cx="1064.8" cy="-1.2" r="0.8" fill="rgb(112,171,255)"/>
<circle cx="1138.4" cy="8.7" r="1.5" fill="rgb(112,171,255)"/>
<circle cx="1079.6" cy="5.8" r="1.0" fill="rgb(112,171,255)"/>
<circle cx="1071.1" cy="11.1" r="0.8" fill="rgb(112,171,255)"/>
<circle cx="1065.9" cy="9.9" r="1.3" fill="rgb(112,171,255)"/>
<circle cx="984.1" cy="27.8" r="0.8" fill="rgb(112,171,255)"/>
<circle cx="1094.7" cy="46.4" r="0.8" fill="rgb(116,160,252)"/>
<circle cx="1091.6" cy="19.0" r="1.3" fill="rgb(112,171,255)"/>
<circle cx="957.6" cy="16.4" r="0.7" fill="rgb(112,171,255)"/>
<circle cx="1032.0" cy="48.7" r="0.9" fill="rgb(112,171,255)"/>
<circle cx="945.8" cy="12.8" r="0.9" fill="rgb(112,171,255)"/>
<circle cx="1072.3" cy="29.9" r="1.4" fill="rgb(112,171,255)"/>
<circle cx="1060.4" cy="53.8" r="1.1" fill="rgb(112,171,255)"/>
<circle cx="1096.1" cy="53.9" r="1.1" fill="rgb(118,155,251)"/>
<circle cx="1078.7" cy="21.8" r="1.1" fill="rgb(112,171,255)"/>
<circle cx="1029.0" cy="32.2" r="1.1" fill="rgb(112,171,255)"/>
<circle cx="998.8" cy="7.6" r="1.2" fill="rgb(112,171,255)"/>
<circle cx="1121.2" cy="13.2" r="0.9" fill="rgb(112,171,255)"/>
<circle cx="975.7" cy="25.5" r="1.2" fill="rgb(112,171,255)"/>
<circle cx="958.4" cy="23.7" r="0.9" fill="rgb(112,171,255)"/>
<circle cx="1064.9" cy="20.1" r="1.4" fill="rgb(112,171,255)"/>
<circle cx="1137.3" cy="17.6" r="1.5" fill="rgb(112,171,255)"/>
<circle cx="1081.9" cy="47.8" r="1.1" fill="rgb(113,166,253)"/>
<circle cx="1128.4" cy="9.3" r="1.0" fill="rgb(112,171,255)"/>
<circle cx="1092.6" cy="25.7" r="0.9" fill="rgb(112,171,255)"/>
<circle cx="976.2" cy="45.2" r="0.8" fill="rgb(112,171,255)"/>
<circle cx="1031.3" cy="48.5" r="1.3" fill="rgb(112,171,255)"/>
<circle cx="1071.1" cy="22.7" r="1.1" fill="rgb(112,171,255)"/>
<circle cx="896.0" cy="23.2" r="0.7" fill="rgb(112,171,255)"/>
<circle cx="898.8" cy="0.8" r="1.0" fill="rgb(112,171,255)"/>
<circle cx="1011.5" cy="14.7" r="1.1" fill="rgb(112,171,255)"/>
<circle cx="959.0" cy="9.7" r="1.1" fill="rgb(112,171,255)"/>
<circle cx="1120.5" cy="9.4" r="1.0" fill="rgb(112,171,255)"/>
<circle cx="761.0" cy="3.1" r="0.8" fill="rgb(112,171,255)"/>
<circle cx="915.2" cy="16.0" r="0.7" fill="rgb(112,171,255)"/>
<circle cx="1043.8" cy="41.7" r="0.9" fill="rgb(112,171,255)"/>
<circle cx="1086.2" cy="11.9" r="1.4" fill="rgb(112,171,255)"/>
<circle cx="831.9" cy="0.7" r="1.0" fill="rgb(112,171,255)"/>
<circle cx="1125.3" cy="17.7" r="1.5" fill="rgb(112,171,255)"/>
<circle cx="1069.7" cy="48.3" r="1.0" fill="rgb(112,171,255)"/>
<circle cx="1097.5" cy="9.0" r="1.5" fill="rgb(112,171,255)"/>
<circle cx="1101.5" cy="53.3" r="1.3" fill="rgb(119,152,250)"/>
<circle cx="965.8" cy="45.7" r="1.0" fill="rgb(112,171,255)"/>
<circle cx="1032.5" cy="28.8" r="0.9" fill="rgb(112,171,255)"/>
<circle cx="1115.6" cy="31.1" r="1.1" fill="rgb(114,165,253)"/>
<circle cx="945.7" cy="7.6" r="1.2" fill="rgb(112,171,255)"/>
<circle cx="998.5" cy="31.7" r="0.9" fill="rgb(112,171,255)"/>
<circle cx="1132.0" cy="33.6" r="0.9" fill="rgb(116,160,252)"/>
<circle cx="1061.8" cy="8.4" r="1.2" fill="rgb(112,171,255)"/>
<circle cx="1114.6" cy="24.2" r="1.3" fill="rgb(112,171,255)"/>
<circle cx="1060.4" cy="51.6" r="1.2" fill="rgb(112,171,255)"/>
<circle cx="1127.8" cy="14.5" r="1.5" fill="rgb(112,171,255)"/>
<circle cx="1142.6" cy="40.4" r="1.5" fill="rgb(122,146,248)"/>
<circle cx="892.6" cy="17.0" r="0.9" fill="rgb(112,171,255)"/>
<circle cx="1065.3" cy="8.0" r="1.5" fill="rgb(112,171,255)"/>
<circle cx="1064.1" cy="1.9" r="1.2" fill="rgb(112,171,255)"/>
<circle cx="1087.3" cy="-1.8" r="0.9" fill="rgb(112,171,255)"/>
<circle cx="1088.9" cy="7.4" r="1.2" fill="rgb(112,171,255)"/>
<circle cx="1092.2" cy="52.1" r="0.9" fill="rgb(116,159,252)"/>
<circle cx="897.0" cy="12.8" r="0.8" fill="rgb(112,171,255)"/>
<circle cx="920.8" cy="21.0" r="0.8" fill="rgb(112,171,255)"/>
<circle cx="1149.1" cy="30.9" r="1.3" fill="rgb(115,161,252)"/>
<circle cx="1130.6" cy="5.6" r="0.9" fill="rgb(112,171,255)"/>
<circle cx="928.9" cy="23.8" r="0.7" fill="rgb(112,171,255)"/>
<circle cx="958.0" cy="37.7" r="1.0" fill="rgb(112,171,255)"/>
<circle cx="1083.4" cy="35.1" r="1.4" fill="rgb(112,168,254)"/>
<circle cx="962.4" cy="42.6" r="1.0" fill="rgb(112,171,255)"/>
<circle cx="1138.9" cy="45.5" r="1.6" fill="rgb(125,139,247)"/>
<circle cx="898.8" cy="51.9" r="1.0" fill="rgb(112,171,255)"/>
<circle cx="1000.6" cy="28.4" r="1.3" fill="rgb(112,171,255)"/>
<circle cx="975.3" cy="32.6" r="0.8" fill="rgb(112,171,255)"/>
<circle cx="1021.7" cy="15.6" r="0.8" fill="rgb(112,171,255)"/>
<circle cx="1114.9" cy="15.7" r="1.2" fill="rgb(112,171,255)"/>
<circle cx="948.8" cy="48.6" r="0.9" fill="rgb(112,171,255)"/>
<circle cx="923.6" cy="19.1" r="0.9" fill="rgb(112,171,255)"/>
<circle cx="999.1" cy="1.5" r="1.0" fill="rgb(112,171,255)"/>
<circle cx="988.1" cy="29.2" r="0.9" fill="rgb(112,171,255)"/>
<circle cx="911.7" cy="16.1" r="1.0" fill="rgb(112,171,255)"/>
<circle cx="1031.3" cy="41.1" r="0.9" fill="rgb(112,171,255)"/>
<circle cx="1120.3" cy="33.3" r="1.3" fill="rgb(115,162,252)"/>
<circle cx="987.1" cy="36.6" r="0.8" fill="rgb(112,171,255)"/>
<circle cx="1147.4" cy="32.6" r="1.1" fill="rgb(117,158,251)"/>
<circle cx="1076.1" cy="36.0" r="1.4" fill="rgb(112,170,254)"/>
<circle cx="944.0" cy="13.7" r="0.7" fill="rgb(112,171,255)"/>
<circle cx="962.0" cy="27.4" r="1.0" fill="rgb(112,171,255)"/>
<circle cx="1116.5" cy="52.0" r="1.3" fill="rgb(123,143,248)"/>
<circle cx="873.7" cy="43.3" r="0.9" fill="rgb(112,171,255)"/>
<circle cx="928.5" cy="18.1" r="0.8" fill="rgb(112,171,255)"/>
<circle cx="816.4" cy="3.1" r="0.9" fill="rgb(112,171,255)"/>
<circle cx="1090.4" cy="11.3" r="1.2" fill="rgb(112,171,255)"/>
<circle cx="1134.2" cy="24.8" r="0.9" fill="rgb(112,171,255)"/>
<circle cx="872.9" cy="25.0" r="0.8" fill="rgb(112,171,255)"/>
<circle cx="1105.4" cy="32.5" r="1.4" fill="rgb(114,165,253)"/>
<circle cx="987.2" cy="19.5" r="1.1" fill="rgb(112,171,255)"/>
<circle cx="1148.2" cy="4.8" r="1.3" fill="rgb(112,171,255)"/>
<circle cx="1140.3" cy="39.2" r="0.9" fill="rgb(121,149,249)"/>
<circle cx="1140.0" cy="47.8" r="1.5" fill="rgb(126,135,246)"/>
<circle cx="1077.4" cy="-1.6" r="1.2" fill="rgb(112,171,255)"/>
<circle cx="1138.0" cy="19.0" r="1.4" fill="rgb(112,171,255)"/>
<circle cx="1044.9" cy="52.7" r="1.2" fill="rgb(112,171,255)"/>
<circle cx="1007.4" cy="8.8" r="1.3" fill="rgb(112,171,255)"/>
<circle cx="1041.7" cy="46.1" r="0.8" fill="rgb(112,171,255)"/>
<circle cx="1144.6" cy="8.9" r="1.2" fill="rgb(112,171,255)"/>
<circle cx="944.4" cy="26.0" r="0.9" fill="rgb(112,171,255)"/>
<circle cx="978.4" cy="53.6" r="1.1" fill="rgb(112,171,255)"/>
<circle cx="1024.5" cy="33.5" r="1.0" fill="rgb(112,171,255)"/>
<circle cx="1022.4" cy="14.4" r="0.9" fill="rgb(112,171,255)"/>
<circle cx="973.6" cy="43.3" r="1.3" fill="rgb(112,171,255)"/>
<circle cx="1035.4" cy="24.4" r="1.3" fill="rgb(112,171,255)"/>
<circle cx="1047.0" cy="38.4" r="1.3" fill="rgb(112,171,255)"/>
<circle cx="1033.1" cy="3.5" r="0.8" fill="rgb(112,171,255)"/>
<circle cx="1058.8" cy="3.1" r="1.3" fill="rgb(112,171,255)"/>
<circle cx="1147.8" cy="0.2" r="1.0" fill="rgb(112,171,255)"/>
<circle cx="1016.0" cy="24.2" r="1.3" fill="rgb(112,171,255)"/>
<circle cx="1097.3" cy="25.3" r="1.3" fill="rgb(112,171,255)"/>
<circle cx="946.1" cy="7.1" r="1.0" fill="rgb(112,171,255)"/>
<circle cx="1077.4" cy="31.0" r="1.0" fill="rgb(112,170,254)"/>
<circle cx="1093.2" cy="13.3" r="1.2" fill="rgb(112,171,255)"/>
<circle cx="1066.4" cy="42.0" r="0.9" fill="rgb(112,171,255)"/>
<circle cx="1049.0" cy="7.0" r="1.4" fill="rgb(112,171,255)"/>
<circle cx="798.5" cy="1.3" r="0.5" fill="rgb(112,171,255)"/>
<circle cx="1039.6" cy="48.8" r="0.9" fill="rgb(112,171,255)"/>
<circle cx="1149.6" cy="28.8" r="1.4" fill="rgb(114,165,253)"/>
<circle cx="1020.3" cy="30.7" r="1.3" fill="rgb(112,171,255)"/>
<circle cx="1116.4" cy="41.6" r="1.1" fill="rgb(118,154,250)"/>
<circle cx="984.4" cy="19.3" r="1.3" fill="rgb(112,171,255)"/>
<circle cx="926.3" cy="5.8" r="0.7" fill="rgb(112,171,255)"/>
<circle cx="1113.5" cy="5.8" r="1.5" fill="rgb(112,171,255)"/>
<circle cx="1054.9" cy="31.1" r="1.2" fill="rgb(112,171,255)"/>
<circle cx="1070.8" cy="9.6" r="1.1" fill="rgb(112,171,255)"/>
<circle cx="931.6" cy="39.7" r="0.9" fill="rgb(112,171,255)"/>
<circle cx="863.2" cy="15.0" r="0.8" fill="rgb(112,171,255)"/>
<circle cx="1082.5" cy="23.2" r="1.0" fill="rgb(112,171,255)"/>
<circle cx="1066.9" cy="1.2" r="1.2" fill="rgb(112,171,255)"/>
<circle cx="912.1" cy="31.0" r="0.9" fill="rgb(112,171,255)"/>
<circle cx="1139.3" cy="30.2" r="1.3" fill="rgb(114,164,253)"/>
<circle cx="1140.3" cy="24.1" r="1.5" fill="rgb(112,171,255)"/>
<circle cx="1095.6" cy="5.2" r="0.8" fill="rgb(112,171,255)"/>
<circle cx="1091.8" cy="47.8" r="1.1" fill="rgb(115,161,252)"/>
<circle cx="1137.9" cy="19.6" r="1.0" fill="rgb(112,171,255)"/>
<circle cx="1116.8" cy="42.9" r="1.4" fill="rgb(119,153,250)"/>
<circle cx="1082.7" cy="35.5" r="1.3" fill="rgb(112,169,254)"/>
<circle cx="1097.4" cy="24.6" r="1.3" fill="rgb(112,171,255)"/>
<circle cx="946.4" cy="0.1" r="0.8" fill="rgb(112,171,255)"/>
<circle cx="1023.9" cy="5.4" r="1.1" fill="rgb(112,171,255)"/>
<circle cx="1074.9" cy="9.3" r="1.5" fill="rgb(112,171,255)"/>
<circle cx="1137.9" cy="9.1" r="1.1" fill="rgb(112,171,255)"/>
<circle cx="1087.6" cy="-1.1" r="0.9" fill="rgb(112,171,255)"/>
<circle cx="1082.8" cy="35.6" r="1.4" fill="rgb(112,169,254)"/>
<circle cx="986.4" cy="1.7" r="0.8" fill="rgb(112,171,255)"/>
<circle cx="1127.7" cy="48.3" r="0.9" fill="rgb(124,141,247)"/>
<circle cx="1059.2" cy="44.6" r="1.3" fill="rgb(112,171,255)"/>
<circle cx="1143.6" cy="42.0" r="1.4" fill="rgb(123,143,248)"/>
<circle cx="980.0" cy="32.5" r="0.8" fill="rgb(112,171,255)"/>
<circle cx="909.7" cy="30.5" r="1.1" fill="rgb(112,171,255)"/>
<circle cx="1124.5" cy="14.0" r="1.4" fill="rgb(112,171,255)"/>
<circle cx="973.3" cy="0.7" r="1.0" fill="rgb(112,171,255)"/>
<circle cx="988.6" cy="53.2" r="0.8" fill="rgb(112,171,255)"/>
<circle cx="1001.6" cy="12.9" r="1.3" fill="rgb(112,171,255)"/>
<circle cx="1088.3" cy="45.3" r="0.9" fill="rgb(114,164,253)"/>
<circle cx="948.6" cy="45.7" r="1.1" fill="rgb(112,171,255)"/>
<circle cx="976.6" cy="33.6" r="0.7" fill="rgb(112,171,255)"/>
<circle cx="1029.1" cy="37.9" r="0.8" fill="rgb(112,171,255)"/>
<circle cx="1095.9" cy="29.7" r="1.3" fill="rgb(112,169,254)"/>
<circle cx="935.1" cy="34.4" r="0.8" fill="rgb(112,171,255)"/>
<circle cx="843.4" cy="30.8" r="0.7" fill="rgb(112,171,255)"/>
<circle cx="1071.8" cy="39.0" r="0.9" fill="rgb(112,171,255)"/>
<circle cx="1047.6" cy="46.7" r="1.0" fill="rgb(112,171,255)"/>
<circle cx="964.5" cy="36.8" r="1.2" fill="rgb(112,171,255)"/>
<circle cx="1020.2" cy="35.5" r="0.9" fill="rgb(112,171,255)"/>
<circle cx="1044.6" cy="6.9" r="1.2" fill="rgb(112,171,255)"/>
<circle cx="934.1" cy="47.4" r="0.9" fill="rgb(112,171,255)"/>
<circle cx="1080.9" cy="40.3" r="1.2" fill="rgb(112,168,254)"/>
<circle cx="902.8" cy="-1.7" r="0.7" fill="rgb(112,171,255)"/>
<circle cx="1097.6" cy="8.7" r="1.2" fill="rgb(112,171,255)"/>
<circle cx="1025.8" cy="34.3" r="1.0" fill="rgb(112,171,255)"/>
<circle cx="909.3" cy="14.4" r="0.8" fill="rgb(112,171,255)"/>
<circle cx="893.3" cy="24.8" r="0.7" fill="rgb(112,171,255)"/>
<circle cx="1138.2" cy="31.1" r="1.0" fill="rgb(115,162,252)"/>
<circle cx="1127.8" cy="39.1" r="1.3" fill="rgb(119,153,250)"/>
<circle cx="1031.5" cy="14.0" r="1.2" fill="rgb(112,171,255)"/>
<circle cx="1125.2" cy="31.7" r="1.6" fill="rgb(114,163,253)"/>
<circle cx="1066.4" cy="10.5" r="0.8" fill="rgb(112,171,255)"/>
<circle cx="1124.1" cy="48.3" r="1.3" fill="rgb(123,143,248)"/>
<circle cx="1129.5" cy="21.2" r="1.1" fill="rgb(112,171,255)"/>
<circle cx="1089.6" cy="22.2" r="1.0" fill="rgb(112,171,255)"/>
<circle cx="1015.1" cy="38.3" r="0.8" fill="rgb(112,171,255)"/>
<circle cx="961.2" cy="25.5" r="1.3" fill="rgb(112,171,255)"/>
<circle cx="1051.0" cy="47.9" r="1.4" fill="rgb(112,171,255)"/>
<circle cx="1113.1" cy="50.7" r="1.0" fill="rgb(121,147,249)"/>
<circle cx="1132.8" cy="14.6" r="1.4" fill="rgb(112,171,255)"/>
<circle cx="1141.8" cy="7.7" r="1.2" fill="rgb(112,171,255)"/>
<circle cx="994.2" cy="31.2" r="1.3" fill="rgb(112,171,255)"/>
<circle cx="1141.9" cy="26.8" r="1.4" fill="rgb(112,169,254)"/>
<circle cx="1013.7" cy="19.6" r="1.3" fill="rgb(112,171,255)"/>
<circle cx="1029.5" cy="31.2" r="1.0" fill="rgb(112,171,255)"/>
<circle cx="963.0" cy="13.8" r="1.1" fill="rgb(112,171,255)"/>
<circle cx="1147.6" cy="14.8" r="0.9" fill="rgb(112,171,255)"/>
<circle cx="962.5" cy="33.0" r="0.9" fill="rgb(112,171,255)"/>
<circle cx="907.6" cy="18.3" r="0.9" fill="rgb(112,171,255)"/>
<circle cx="907.2" cy="26.5" r="1.2" fill="rgb(112,171,255)"/>
<circle cx="806.7" cy="19.5" r="0.5" fill="rgb(112,171,255)"/>
<circle cx="1031.6" cy="-0.2" r="1.0" fill="rgb(112,171,255)"/>
<circle cx="1117.5" cy="11.2" r="1.4" fill="rgb(112,171,255)"/>
<circle cx="964.1" cy="37.3" r="1.1" fill="rgb(112,171,255)"/>
<circle cx="1110.6" cy="-1.5" r="1.0" fill="rgb(112,171,255)"/>
<circle cx="975.5" cy="10.0" r="1.0" fill="rgb(112,171,255)"/>
<circle cx="1065.9" cy="37.3" r="1.0" fill="rgb(112,171,255)"/>
<circle cx="1032.9" cy="2.8" r="0.9" fill="rgb(112,171,255)"/>
<circle cx="1133.7" cy="47.4" r="1.2" fill="rgb(125,139,247)"/>
<circle cx="983.7" cy="32.8" r="1.0" fill="rgb(112,171,255)"/>
<circle cx="975.7" cy="36.5" r="1.1" fill="rgb(112,171,255)"/>
<circle cx="1053.4" cy="53.5" r="1.0" fill="rgb(112,171,255)"/>
<circle cx="1140.1" cy="12.0" r="1.6" fill="rgb(112,171,255)"/>
<circle cx="1065.6" cy="17.9" r="1.0" fill="rgb(112,171,255)"/>
<circle cx="963.8" cy="50.9" r="0.8" fill="rgb(112,171,255)"/>
<circle cx="1117.6" cy="40.0" r="1.0" fill="rgb(118,155,251)"/>
<circle cx="1058.2" cy="51.2" r="0.9" fill="rgb(112,171,255)"/>
<circle cx="971.1" cy="45.9" r="0.9" fill="rgb(112,171,255)"/>
<circle cx="939.9" cy="43.9" r="1.1" fill="rgb(112,171,255)"/>
<circle cx="1071.9" cy="36.5" r="1.1" fill="rgb(112,171,255)"/>
<circle cx="1106.8" cy="51.8" r="1.5" fill="rgb(120,150,249)"/>
<circle cx="1119.0" cy="43.9" r="1.0" fill="rgb(120,150,249)"/>
<circle cx="1065.0" cy="-2.0" r="1.3" fill="rgb(112,171,255)"/>
<circle cx="1108.8" cy="45.6" r="0.9" fill="rgb(119,154,250)"/>
<circle cx="1042.9" cy="48.8" r="0.9" fill="rgb(112,171,255)"/>
<circle cx="1126.4" cy="15.9" r="0.9" fill="rgb(112,171,255)"/>
<circle cx="817.0" cy="-0.0" r="0.6" fill="rgb(112,171,255)"/>
<circle cx="939.1" cy="2.9" r="1.1" fill="rgb(112,171,255)"/>
<circle cx="1141.8" cy="40.0" r="1.1" fill="rgb(121,147,249)"/>
<circle cx="1139.8" cy="52.8" r="1.4" fill="rgb(130,127,244)"/>
<circle cx="824.8" cy="4.3" r="0.7" fill="rgb(112,171,255)"/>
<circle cx="1067.1" cy="27.5" r="1.1" fill="rgb(112,171,255)"/>
<circle cx="1023.9" cy="22.8" r="1.2" fill="rgb(112,171,255)"/>
<circle cx="987.0" cy="14.0" r="1.1" fill="rgb(112,171,255)"/>
<circle cx="1121.0" cy="46.8" r="1.1" fill="rgb(122,146,248)"/>
<circle cx="1061.2" cy="52.2" r="0.9" fill="rgb(112,171,255)"/>
<circle cx="1065.3" cy="-0.4" r="1.3" fill="rgb(112,171,255)"/>
<circle cx="912.4" cy="8.0" r="1.0" fill="rgb(112,171,255)"/>
<circle cx="1052.7" cy="20.5" r="1.4" fill="rgb(112,171,255)"/>
<circle cx="864.6" cy="15.9" r="1.0" fill="rgb(112,171,255)"/>
<circle cx="1080.2" cy="0.8" r="1.0" fill="rgb(112,171,255)"/>
<circle cx="987.1" cy="24.1" r="1.0" fill="rgb(112,171,255)"/>
<circle cx="1093.6" cy="25.2" r="1.3" fill="rgb(112,171,255)"/>
<circle cx="1073.4" cy="24.8" r="1.2" fill="rgb(112,171,255)"/>
<circle cx="831.5" cy="12.8" r="0.7" fill="rgb(112,171,255)"/>
<circle cx="1090.4" cy="5.9" r="0.8" fill="rgb(112,171,255)"/>
<circle cx="1113.0" cy="47.3" r="1.4" fill="rgb(120,150,249)"/>
<circle cx="1132.0" cy="24.2" r="0.9" fill="rgb(112,171,255)"/>
<circle cx="1040.5" cy="25.8" r="1.4" fill="rgb(112,171,255)"/>
<circle cx="1070.1" cy="39.6" r="1.2" fill="rgb(112,171,255)"/>
<circle cx="1022.9" cy="5.6" r="1.0" fill="rgb(112,171,255)"/>
<circle cx="1134.4" cy="31.5" r="1.0" fill="rgb(115,162,252)"/>
<circle cx="1108.4" cy="12.2" r="1.2" fill="rgb(112,171,255)"/>
<circle cx="1034.2" cy="30.1" r="1.3" fill="rgb(112,171,255)"/>
<circle cx="942.8" cy="41.0" r="0.8" fill="rgb(112,171,255)"/>
<circle cx="786.5" cy="43.0" r="0.6" fill="rgb(112,171,255)"/>
<circle cx="1066.8" cy="26.4" r="1.4" fill="rgb(112,171,255)"/>
<circle cx="1049.2" cy="26.4" r="1.2" fill="rgb(112,171,255)"/>
<circle cx="1094.4" cy="42.0" r="1.4" fill="rgb(115,163,253)"/>
<circle cx="962.4" cy="34.7" r="1.1" fill="rgb(112,171,255)"/>
<circle cx="1006.1" cy="53.8" r="1.0" fill="rgb(112,171,255)"/>
<circle cx="1059.3" cy="33.7" r="1.2" fill="rgb(112,171,255)"/>
<circle cx="1066.2" cy="47.0" r="1.4" fill="rgb(112,171,255)"/>
<circle cx="1050.0" cy="22.2" r="1.3" fill="rgb(112,171,255)"/>
<circle cx="1094.5" cy="40.6" r="1.5" fill="rgb(115,163,253)"/>
<circle cx="1075.8" cy="50.2" r="0.9" fill="rgb(112,170,254)"/>
<circle cx="1147.7" cy="49.4" r="1.6" fill="rgb(129,128,244)"/>
<circle cx="951.9" cy="45.6" r="1.2" fill="rgb(112,171,255)"/>
<circle cx="890.6" cy="31.4" r="1.1" fill="rgb(112,171,255)"/>
<circle cx="880.2" cy="13.0" r="0.9" fill="rgb(112,171,255)"/>
<circle cx="1145.3" cy="37.7" r="1.5" fill="rgb(120,150,249)"/>
<circle cx="926.9" cy="3.9" r="1.0" fill="rgb(112,171,255)"/>
<circle cx="1078.2" cy="11.8" r="0.8" fill="rgb(112,171,255)"/>
<circle cx="1063.4" cy="50.3" r="0.9" fill="rgb(112,171,255)"/>
<circle cx="1102.4" cy="27.4" r="1.3" fill="rgb(112,169,254)"/>
<circle cx="987.2" cy="12.9" r="1.1" fill="rgb(112,171,255)"/>
<circle cx="1039.9" cy="50.5" r="1.3" fill="rgb(112,171,255)"/>
<circle cx="1089.3" cy="33.2" r="1.0" fill="rgb(113,168,254)"/>
<circle cx="816.1" cy="10.4" r="0.7" fill="rgb(112,171,255)"/>
<circle cx="788.2" cy="11.1" r="0.9" fill="rgb(112,171,255)"/>
<circle cx="1047.2" cy="40.1" r="0.9" fill="rgb(112,171,255)"/>
<circle cx="1100.2" cy="29.5" r="1.0" fill="rgb(112,168,254)"/>
<circle cx="900.1" cy="1.2" r="1.0" fill="rgb(112,171,255)"/>
<circle cx="1145.3" cy="10.7" r="1.4" fill="rgb(112,171,255)"/>
<circle cx="1024.3" cy="44.8" r="0.9" fill="rgb(112,171,255)"/>
<circle cx="934.5" cy="13.6" r="0.7" fill="rgb(112,171,255)"/>
<circle cx="1064.3" cy="30.8" r="1.2" fill="rgb(112,171,255)"/>
<circle cx="1074.2" cy="27.1" r="1.2" fill="rgb(112,171,255)"/>
<circle cx="1058.9" cy="25.9" r="1.1" fill="rgb(112,171,255)"/>
<circle cx="1051.5" cy="7.6" r="1.1" fill="rgb(112,171,255)"/>
<circle cx="979.3" cy="27.5" r="0.9" fill="rgb(112,171,255)"/>
<circle cx="1087.8" cy="19.1" r="1.2" fill="rgb(112,171,255)"/>
<circle cx="1106.3" cy="54.0" r="1.5" fill="rgb(121,148,249)"/>
<circle cx="1078.2" cy="43.1" r="1.1" fill="rgb(112,169,254)"/>
<circle cx="995.4" cy="20.1" r="0.9" fill="rgb(112,171,255)"/>
<circle cx="1055.8" cy="17.5" r="1.2" fill="rgb(112,171,255)"/>
<circle cx="1090.8" cy="16.5" r="1.1" fill="rgb(112,171,255)"/>
<circle cx="1077.8" cy="39.6" r="1.4" fill="rgb(112,169,254)"/>
<circle cx="1024.2" cy="32.5" r="0.7" fill="rgb(112,171,255)"/>
<circle cx="1117.0" cy="47.3" r="1.5" fill="rgb(121,148,249)"/>
<circle cx="940.0" cy="38.2" r="1.1" fill="rgb(112,171,255)"/>
<circle cx="1118.1" cy="21.1" r="1.0" fill="rgb(112,171,255)"/>
<circle cx="1146.3" cy="15.7" r="1.3" fill="rgb(112,171,255)"/>
<circle cx="924.9" cy="23.7" r="1.2" fill="rgb(112,171,255)"/>
<circle cx="1044.0" cy="16.2" r="0.9" fill="rgb(112,171,255)"/>
<circle cx="1053.3" cy="18.1" r="1.2" fill="rgb(112,171,255)"/>
<circle cx="1090.8" cy="1.4" r="1.0" fill="rgb(112,171,255)"/>
<circle cx="1059.6" cy="36.7" r="1.3" fill="rgb(112,171,255)"/>
<circle cx="1094.7" cy="43.6" r="1.4" fill="rgb(115,162,252)"/>
<circle cx="859.8" cy="30.9" r="0.9" fill="rgb(112,171,255)"/>
<circle cx="1131.7" cy="23.6" r="1.3" fill="rgb(112,171,255)"/>
<circle cx="791.5" cy="44.2" r="0.9" fill="rgb(112,171,255)"/>
<circle cx="1059.4" cy="35.6" r="0.8" fill="rgb(112,171,255)"/>
<circle cx="1027.6" cy="50.9" r="1.0" fill="rgb(112,171,255)"/>
<circle cx="1092.6" cy="11.0" r="1.0" fill="rgb(112,171,255)"/>
<circle cx="951.9" cy="25.0" r="1.2" fill="rgb(112,171,255)"/>
<circle cx="1000.3" cy="27.0" r="1.0" fill="rgb(112,171,255)"/>
<circle cx="1113.3" cy="21.7" r="1.5" fill="rgb(112,171,255)"/>
<circle cx="903.6" cy="45.8" r="1.0" fill="rgb(112,171,255)"/>
<circle cx="1108.5" cy="38.4" r="1.5" fill="rgb(116,160,252)"/>
<circle cx="1128.9" cy="30.9" r="1.4" fill="rgb(114,164,253)"/>
<circle cx="1053.8" cy="16.2" r="1.0" fill="rgb(112,171,255)"/>
<circle cx="1114.1" cy="-1.1" r="1.3" fill="rgb(112,171,255)"/>
<circle cx="1132.6" cy="6.9" r="0.9" fill="rgb(112,171,255)"/>
<circle cx="1084.0" cy="48.2" r="1.0" fill="rgb(114,165,253)"/>
<circle cx="962.7" cy="33.1" r="1.0" fill="rgb(112,171,255)"/>
<circle cx="1021.1" cy="17.5" r="1.2" fill="rgb(112,171,255)"/>
<circle cx="1092.8" cy="1.3" r="1.1" fill="rgb(112,171,255)"/>
<circle cx="926.8" cy="28.8" r="1.0" fill="rgb(112,171,255)"/>
<circle cx="999.6" cy="4.9" r="0.9" fill="rgb(112,171,255)"/>
<circle cx="899.5" cy="49.8" r="1.0" fill="rgb(112,171,255)"/>
<circle cx="1108.8" cy="22.6" r="1.3" fill="rgb(112,171,255)"/>
<circle cx="1066.1" cy="39.4" r="1.0" fill="rgb(112,171,255)"/>
<circle cx="916.9" cy="47.3" r="0.8" fill="rgb(112,171,255)"/>
<circle cx="814.3" cy="1.5" r="0.9" fill="rgb(112,171,255)"/>
<circle cx="995.6" cy="30.0" r="0.9" fill="rgb(112,171,255)"/>
<circle cx="915.9" cy="0.6" r="1.1" fill="rgb(112,171,255)"/>
<circle cx="955.8" cy="19.9" r="0.9" fill="rgb(112,171,255)"/>
<circle cx="1045.4" cy="19.4" r="1.3" fill="rgb(112,171,255)"/>
<circle cx="1065.5" cy="37.0" r="1.0" fill="rgb(112,171,255)"/>
<circle cx="1092.1" cy="29.0" r="1.1" fill="rgb(112,169,254)"/>
<circle cx="847.0" cy="22.2" r="0.8" fill="rgb(112,171,255)"/>
<circle cx="1146.3" cy="37.5" r="1.1" fill="rgb(120,150,249)"/>
<circle cx="979.8" cy="40.5" r="0.8" fill="rgb(112,171,255)"/>
<circle cx="1115.7" cy="34.0" r="0.9" fill="rgb(115,162,252)"/>
<circle cx="1056.2" cy="30.1" r="1.4" fill="rgb(112,171,255)"/>
<circle cx="1001.5" cy="6.5" r="1.2" fill="rgb(112,171,255)"/>
<circle cx="1098.8" cy="48.4" r="1.1" fill="rgb(117,157,251)"/>
<circle cx="789.3" cy="35.9" r="0.6" fill="rgb(112,171,255)"/>
<circle cx="872.8" cy="53.5" r="0.6" fill="rgb(112,171,255)"/>
<circle cx="1038.0" cy="13.0" r="1.1" fill="rgb(112,171,255)"/>
<circle cx="1120.5" cy="20.2" r="1.2" fill="rgb(112,171,255)"/>
<circle cx="926.7" cy="45.2" r="0.8" fill="rgb(112,171,255)"/>
<circle cx="1143.6" cy="16.4" r="1.2" fill="rgb(112,171,255)"/>
<circle cx="880.7" cy="1.2" r="1.1" fill="rgb(112,171,255)"/>
<circle cx="1141.7" cy="32.4" r="1.0" fill="rgb(116,160,252)"/>
<circle cx="969.0" cy="54.0" r="0.7" fill="rgb(112,171,255)"/>
<circle cx="892.5" cy="43.6" r="1.0" fill="rgb(112,171,255)"/>
<circle cx="989.2" cy="45.4" r="1.1" fill="rgb(112,171,255)"/>
<circle cx="1069.1" cy="42.6" r="1.3" fill="rgb(112,171,255)"/>
<circle cx="1031.2" cy="18.3" r="1.4" fill="rgb(112,171,255)"/>
<circle cx="1045.6" cy="50.6" r="1.0" fill="rgb(112,171,255)"/>
<circle cx="783.2" cy="23.7" r="0.7" fill="rgb(112,171,255)"/>
<circle cx="1012.1" cy="34.3" r="0.9" fill="rgb(112,171,255)"/>
<circle cx="1134.2" cy="9.0" r="1.3" fill="rgb(112,171,255)"/>
<circle cx="1048.6" cy="37.5" r="0.9" fill="rgb(112,171,255)"/>
<circle cx="1042.6" cy="10.8" r="1.3" fill="rgb(112,171,255)"/>
<circle cx="1064.0" cy="38.5" r="0.9" fill="rgb(112,171,255)"/>
<circle cx="986.0" cy="-1.8" r="0.9" fill="rgb(112,171,255)"/>
<circle cx="912.9" cy="14.0" r="0.8" fill="rgb(112,171,255)"/>
<circle cx="941.3" cy="47.4" r="1.2" fill="rgb(112,171,255)"/>
<circle cx="1048.7" cy="49.3" r="1.2" fill="rgb(112,171,255)"/>
<circle cx="1005.0" cy="5.5" r="1.3" fill="rgb(112,171,255)"/>
<circle cx="1074.2" cy="-0.3" r="0.8" fill="rgb(112,171,255)"/>
<circle cx="958.3" cy="53.1" r="1.0" fill="rgb(112,171,255)"/>
<circle cx="1062.0" cy="4.1" r="1.3" fill="rgb(112,171,255)"/>
<circle cx="999.2" cy="26.7" r="1.0" fill="rgb(112,171,255)"/>
<circle cx="1088.1" cy="18.7" r="1.0" fill="rgb(112,171,255)"/>
<circle cx="1082.9" cy="27.0" r="1.4" fill="rgb(112,170,254)"/>
<circle cx="1143.5" cy="21.3" r="1.1" fill="rgb(112,171,255)"/>
<circle cx="1147.8" cy="7.7" r="1.4" fill="rgb(112,171,255)"/>
<circle cx="1120.4" cy="-1.5" r="1.5" fill="rgb(112,171,255)"/>
<circle cx="945.7" cy="3.3" r="0.7" fill="rgb(112,171,255)"/>
<circle cx="1006.0" cy="10.2" r="0.9" fill="rgb(112,171,255)"/>
<circle cx="1065.9" cy="42.1" r="1.2" fill="rgb(112,171,255)"/>
<circle cx="1064.9" cy="4.0" r="1.0" fill="rgb(112,171,255)"/>
<circle cx="1085.4" cy="40.6" r="1.5" fill="rgb(113,167,254)"/>
<circle cx="919.6" cy="51.4" r="1.1" fill="rgb(112,171,255)"/>
<circle cx="1032.6" cy="15.8" r="1.2" fill="rgb(112,171,255)"/>
<circle cx="1057.4" cy="29.1" r="1.4" fill="rgb(112,171,255)"/>
<circle cx="1116.8" cy="42.3" r="1.0" fill="rgb(119,153,250)"/>
<circle cx="1052.2" cy="33.4" r="1.0" fill="rgb(112,171,255)"/>
<circle cx="964.1" cy="40.9" r="0.8" fill="rgb(112,171,255)"/>
<circle cx="1065.0" cy="36.9" r="1.0" fill="rgb(112,171,255)"/>
<circle cx="847.2" cy="28.0" r="0.9" fill="rgb(112,171,255)"/>
<circle cx="1132.6" cy="7.2" r="1.3" fill="rgb(112,171,255)"/>
<circle cx="1020.5" cy="41.3" r="1.2" fill="rgb(112,171,255)"/>
<circle cx="975.1" cy="48.1" r="1.0" fill="rgb(112,171,255)"/>
<circle cx="1059.2" cy="37.5" r="1.1" fill="rgb(112,171,255)"/>
<circle cx="886.3" cy="25.6" r="0.8" fill="rgb(112,171,255)"/>
<circle cx="1063.1" cy="25.9" r="1.1" fill="rgb(112,171,255)"/>
<circle cx="1143.2" cy="-0.5" r="1.0" fill="rgb(112,171,255)"/>
<circle cx="1047.1" cy="16.6" r="1.4" fill="rgb(112,171,255)"/>
<circle cx="1052.6" cy="30.2" r="1.0" fill="rgb(112,171,255)"/>
<circle cx="1122.6" cy="9.9" r="1.5" fill="rgb(112,171,255)"/>
<circle cx="975.0" cy="-1.5" r="1.1" fill="rgb(112,171,255)"/>
<circle cx="937.2" cy="7.2" r="0.8" fill="rgb(112,171,255)"/>
<circle cx="1106.0" cy="-0.8" r="0.9" fill="rgb(112,171,255)"/>
<circle cx="1099.8" cy="34.8" r="1.4" fill="rgb(114,165,253)"/>
<circle cx="1105.2" cy="2.8" r="1.4" fill="rgb(112,171,255)"/>
<circle cx="1134.5" cy="30.7" r="1.5" fill="rgb(114,163,253)"/>
<circle cx="1094.5" cy="13.0" r="0.9" fill="rgb(112,171,255)"/>
<circle cx="1101.1" cy="12.9" r="1.3" fill="rgb(112,171,255)"/>
<circle cx="1072.8" cy="50.7" r="1.1" fill="rgb(112,171,255)"/>
<circle cx="1052.2" cy="30.9" r="1.0" fill="rgb(112,171,255)"/>
<circle cx="946.1" cy="5.6" r="1.0" fill="rgb(112,171,255)"/>
<circle cx="1002.4" cy="20.9" r="1.1" fill="rgb(112,171,255)"/>
<circle cx="1078.5" cy="22.3" r="1.4" fill="rgb(112,171,255)"/>
<circle cx="1065.1" cy="33.6" r="1.0" fill="rgb(112,171,255)"/>
<circle cx="1090.0" cy="5.8" r="1.4" fill="rgb(112,171,255)"/>
<circle cx="819.2" cy="25.7" r="0.9" fill="rgb(112,171,255)"/>
<circle cx="1039.2" cy="-0.1" r="1.2" fill="rgb(112,171,255)"/>
<circle cx="1046.5" cy="50.9" r="1.0" fill="rgb(112,171,255)"/>
<circle cx="1005.0" cy="4.1" r="1.0" fill="rgb(112,171,255)"/>
<circle cx="1010.8" cy="44.1" r="1.1" fill="rgb(112,171,255)"/>
<circle cx="869.1" cy="32.7" r="0.8" fill="rgb(112,171,255)"/>
<circle cx="942.3" cy="51.3" r="1.1" fill="rgb(112,171,255)"/>
<circle cx="1064.7" cy="42.4" r="1.3" fill="rgb(112,171,255)"/>
<circle cx="1102.6" cy="33.8" r="1.5" fill="rgb(114,165,253)"/>
<circle cx="1141.9" cy="30.6" r="1.3" fill="rgb(115,163,253)"/>
<circle cx="1149.4" cy="52.5" r="1.2" fill="rgb(132,122,242)"/>
<circle cx="1054.8" cy="52.0" r="1.1" fill="rgb(112,171,255)"/>
<circle cx="953.6" cy="3.7" r="1.1" fill="rgb(112,171,255)"/>
<circle cx="1119.7" cy="1.5" r="1.2" fill="rgb(112,171,255)"/>
<circle cx="907.9" cy="12.8" r="0.8" fill="rgb(112,171,255)"/>
<circle cx="1100.7" cy="34.1" r="1.1" fill="rgb(114,165,253)"/>
<circle cx="1086.8" cy="11.1" r="1.1" fill="rgb(112,171,255)"/>
<circle cx="1143.1" cy="11.2" r="1.0" fill="rgb(112,171,255)"/>
<circle cx="888.1" cy="52.6" r="0.7" fill="rgb(112,171,255)"/>
<circle cx="1098.3" cy="4.6" r="0.9" fill="rgb(112,171,255)"/>
<circle cx="1053.3" cy="41.2" r="1.1" fill="rgb(112,171,255)"/>
<circle cx="1087.2" cy="5.1" r="1.2" fill="rgb(112,171,255)"/>
<circle cx="1112.1" cy="32.5" r="0.9" fill="rgb(114,164,253)"/>
<circle cx="1066.2" cy="52.7" r="1.0" fill="rgb(112,171,255)"/>
<circle cx="845.9" cy="10.7" r="0.8" fill="rgb(112,171,255)"/>
<circle cx="1121.6" cy="38.8" r="1.1" fill="rgb(118,155,251)"/>
<circle cx="1069.5" cy="44.0" r="1.0" fill="rgb(112,171,255)"/>
<circle cx="1102.8" cy="3.9" r="0.8" fill="rgb(112,171,255)"/>
<circle cx="1105.2" cy="29.4" r="1.2" fill="rgb(113,168,254)"/>
<circle cx="917.7" cy="25.6" r="1.2" fill="rgb(112,171,255)"/>
<circle cx="1075.8" cy="28.9" r="0.9" fill="rgb(112,170,254)"/>
<circle cx="851.4" cy="3.1" r="0.9" fill="rgb(112,171,255)"/>
<circle cx="1109.7" cy="48.1" r="1.0" fill="rgb(120,151,250)"/>
<circle cx="885.6" cy="28.0" r="0.6" fill="rgb(112,171,255)"/>
<circle cx="1075.9" cy="2.9" r="1.0" fill="rgb(112,171,255)"/>
<circle cx="1107.7" cy="27.3" r="0.9" fill="rgb(112,169,254)"/>
<circle cx="1084.5" cy="51.8" r="1.4" fill="rgb(114,164,253)"/>
<circle cx="1059.2" cy="35.4" r="0.8" fill="rgb(112,171,255)"/>
<circle cx="1104.4" cy="43.7" r="1.0" fill="rgb(117,157,251)"/>
<circle cx="1036.0" cy="-1.1" r="0.8" fill="rgb(112,171,255)"/>
<circle cx="1049.8" cy="4.2" r="1.3" fill="rgb(112,171,255)"/>
<circle cx="1020.5" cy="21.5" r="0.9" fill="rgb(112,171,255)"/>
<circle cx="956.6" cy="32.3" r="0.7" fill="rgb(112,171,255)"/>
<circle cx="1008.1" cy="42.9" r="1.0" fill="rgb(112,171,255)"/>
<circle cx="1115.5" cy="32.0" r="1.1" fill="rgb(114,164,253)"/>
<circle cx="891.1" cy="47.4" r="0.8" fill="rgb(112,171,255)"/>
<circle cx="1073.4" cy="43.8" r="1.3" fill="rgb(112,171,255)"/>
<circle cx="1018.0" cy="53.0" r="1.1" fill="rgb(112,171,255)"/>
<circle cx="857.7" cy="38.6" r="1.0" fill="rgb(112,171,255)"/>
<circle cx="1124.6" cy="46.2" r="1.5" fill="rgb(122,145,248)"/>
<circle cx="1062.6" cy="29.4" r="1.4" fill="rgb(112,171,255)"/>
<circle cx="1141.6" cy="24.2" r="1.5" fill="rgb(112,171,255)"/>
<circle cx="834.9" cy="42.8" r="0.8" fill="rgb(112,171,255)"/>
<circle cx="1125.3" cy="31.8" r="1.0" fill="rgb(115,163,253)"/>
<circle cx="1042.8" cy="35.5" r="1.0" fill="rgb(112,171,255)"/>
<circle cx="941.1" cy="49.2" r="0.9" fill="rgb(112,171,255)"/>
<circle cx="1130.6" cy="2.4" r="1.4" fill="rgb(112,171,255)"/>
<circle cx="1008.1" cy="15.1" r="1.2" fill="rgb(112,171,255)"/>
<circle cx="1099.2" cy="17.0" r="1.2" fill="rgb(112,171,255)"/>
<circle cx="936.1" cy="50.1" r="1.1" fill="rgb(112,171,255)"/>
<circle cx="903.5" cy="18.3" r="0.7" fill="rgb(112,171,255)"/>
<circle cx="1005.0" cy="45.6" r="1.2" fill="rgb(112,171,255)"/>
<circle cx="1046.5" cy="1.2" r="0.9" fill="rgb(112,171,255)"/>
<circle cx="1097.0" cy="39.8" r="1.0" fill="rgb(115,163,253)"/>
<circle cx="1126.9" cy="44.9" r="1.1" fill="rgb(122,146,248)"/>
<circle cx="1082.0" cy="14.7" r="1.4" fill="rgb(112,171,255)"/>
<circle cx="991.8" cy="35.1" r="0.8" fill="rgb(112,171,255)"/>
<circle cx="1122.3" cy="52.0" r="0.9" fill="rgb(124,139,247)"/>
<circle cx="1025.8" cy="48.5" r="0.9" fill="rgb(112,171,255)"/>
<circle cx="968.2" cy="39.3" r="1.0" fill="rgb(112,171,255)"/>
<circle cx="957.7" cy="50.2" r="0.8" fill="rgb(112,171,255)"/>
<circle cx="988.2" cy="37.7" r="1.2" fill="rgb(112,171,255)"/>
<circle cx="926.9" cy="-0.1" r="1.2" fill="rgb(112,171,255)"/>
<circle cx="974.6" cy="36.1" r="0.8" fill="rgb(112,171,255)"/>
<circle cx="919.2" cy="45.1" r="1.1" fill="rgb(112,171,255)"/>
<circle cx="1079.1" cy="39.2" r="0.9" fill="rgb(112,169,254)"/>
<circle cx="1071.5" cy="10.3" r="1.2" fill="rgb(112,171,255)"/>
<circle cx="849.7" cy="23.3" r="0.8" fill="rgb(112,171,255)"/>
<circle cx="1021.6" cy="26.9" r="0.8" fill="rgb(112,171,255)"/>
<circle cx="1114.9" cy="33.1" r="1.0" fill="rgb(114,163,253)"/>
<circle cx="893.4" cy="9.0" r="1.0" fill="rgb(112,171,255)"/>
<circle cx="956.3" cy="53.7" r="0.7" fill="rgb(112,171,255)"/>
<circle cx="957.2" cy="36.9" r="0.8" fill="rgb(112,171,255)"/>
<circle cx="1141.5" cy="6.1" r="1.4" fill="rgb(112,171,255)"/>
<circle cx="1000.4" cy="34.6" r="1.2" fill="rgb(112,171,255)"/>
<circle cx="1029.6" cy="21.0" r="0.9" fill="rgb(112,171,255)"/>
<circle cx="1116.3" cy="16.7" r="1.2" fill="rgb(112,171,255)"/>
<circle cx="827.1" cy="37.9" r="0.9" fill="rgb(112,171,255)"/>
<circle cx="883.1" cy="36.5" r="0.9" fill="rgb(112,171,255)"/>
<circle cx="872.9" cy="53.8" r="1.1" fill="rgb(112,171,255)"/>
<circle cx="1140.6" cy="4.1" r="1.3" fill="rgb(112,171,255)"/>
<circle cx="873.6" cy="42.0" r="0.7" fill="rgb(112,171,255)"/>
<circle cx="924.5" cy="7.9" r="1.2" fill="rgb(112,171,255)"/>
<circle cx="1119.8" cy="10.9" r="1.3" fill="rgb(112,171,255)"/>
<circle cx="1118.7" cy="23.9" r="1.2" fill="rgb(112,171,255)"/>
<circle cx="1075.4" cy="53.6" r="1.0" fill="rgb(112,170,254)"/>
<circle cx="1106.0" cy="37.2" r="1.3" fill="rgb(115,162,252)"/>
<circle cx="862.2" cy="42.8" r="0.9" fill="rgb(112,171,255)"/>
<circle cx="1040.7" cy="53.6" r="1.1" fill="rgb(112,171,255)"/>
<circle cx="960.4" cy="14.1" r="0.9" fill="rgb(112,171,255)"/>
<circle cx="990.0" cy="44.2" r="1.0" fill="rgb(112,171,255)"/>
<circle cx="1054.3" cy="18.4" r="1.2" fill="rgb(112,171,255)"/>
<circle cx="920.4" cy="34.6" r="0.8" fill="rgb(112,171,255)"/>
<circle cx="1032.0" cy="20.9" r="1.2" fill="rgb(112,171,255)"/>
<circle cx="1020.4" cy="16.3" r="1.2" fill="rgb(112,171,255)"/>
<circle cx="871.2" cy="2.0" r="1.1" fill="rgb(112,171,255)"/>
<circle cx="946.2" cy="5.8" r="1.0" fill="rgb(112,171,255)"/>
<circle cx="948.2" cy="30.5" r="0.7" fill="rgb(112,171,255)"/>
<circle cx="1015.7" cy="53.3" r="0.7" fill="rgb(112,171,255)"/>
<circle cx="1089.3" cy="53.2" r="1.3" fill="rgb(116,160,252)"/>
<circle cx="1058.3" cy="27.9" r="1.4" fill="rgb(112,171,255)"/>
<circle cx="944.3" cy="8.2" r="1.1" fill="rgb(112,171,255)"/>
<circle cx="1115.7" cy="38.0" r="1.4" fill="rgb(117,158,251)"/>
<circle cx="1102.6" cy="29.3" r="1.3" fill="rgb(112,168,254)"/>
<circle cx="899.5" cy="21.8" r="0.9" fill="rgb(112,171,255)"/>
<circle cx="1040.0" cy="36.5" r="1.1" fill="rgb(112,171,255)"/>
<circle cx="987.1" cy="47.4" r="0.8" fill="rgb(112,171,255)"/>
<circle cx="1105.7" cy="46.3" r="1.3" fill="rgb(118,155,251)"/>
<circle cx="847.3" cy="26.0" r="0.7" fill="rgb(112,171,255)"/>
<circle cx="1017.3" cy="29.5" r="0.9" fill="rgb(112,171,255)"/>
<circle cx="929.8" cy="23.6" r="0.7" fill="rgb(112,171,255)"/>
<circle cx="1141.0" cy="2.9" r="1.4" fill="rgb(112,171,255)"/>
<circle cx="1022.8" cy="41.8" r="1.0" fill="rgb(112,171,255)"/>
<circle cx="991.6" cy="17.0" r="1.0" fill="rgb(112,171,255)"/>
<circle cx="904.1" cy="52.7" r="1.0" fill="rgb(112,171,255)"/>
<circle cx="1091.6" cy="15.3" r="1.0" fill="rgb(112,171,255)"/>
<circle cx="876.0" cy="7.9" r="0.6" fill="rgb(112,171,255)"/>
<circle cx="1012.5" cy="29.4" r="0.9" fill="rgb(112,171,255)"/>
<circle cx="1043.5" cy="33.2" r="1.0" fill="rgb(112,171,255)"/>
<circle cx="1136.7" cy="15.1" r="0.9" fill="rgb(112,171,255)"/>
<circle cx="926.4" cy="44.3" r="0.8" fill="rgb(112,171,255)"/>
<circle cx="1056.6" cy="46.1" r="1.2" fill="rgb(112,171,255)"/>
<circle cx="1117.2" cy="28.3" r="1.1" fill="rgb(113,168,254)"/>
<circle cx="1112.7" cy="21.5" r="1.0" fill="rgb(112,171,255)"/>
<circle cx="1135.5" cy="5.5" r="1.0" fill="rgb(112,171,255)"/>
<circle cx="990.4" cy="26.0" r="0.9" fill="rgb(112,171,255)"/>
<circle cx="1018.3" cy="46.7" r="1.2" fill="rgb(112,171,255)"/>
<circle cx="1107.8" cy="14.2" r="1.4" fill="rgb(112,171,255)"/>
<circle cx="833.8" cy="53.6" r="0.9" fill="rgb(112,171,255)"/>
<circle cx="952.4" cy="47.1" r="0.7" fill="rgb(112,171,255)"/>
<circle cx="1056.1" cy="21.2" r="1.3" fill="rgb(112,171,255)"/>
<circle cx="1014.4" cy="50.6" r="1.3" fill="rgb(112,171,255)"/>
<circle cx="1060.6" cy="36.1" r="1.3" fill="rgb(112,171,255)"/>
<circle cx="1127.6" cy="7.9" r="1.3" fill="rgb(112,171,255)"/>
<circle cx="1148.5" cy="5.4" r="0.9" fill="rgb(112,171,255)"/>
<circle cx="1028.1" cy="4.5" r="0.9" fill="rgb(112,171,255)"/>
<circle cx="1001.8" cy="51.9" r="0.9" fill="rgb(112,171,255)"/>
<circle cx="933.8" cy="32.2" r="0.9" fill="rgb(112,171,255)"/>
<circle cx="966.7" cy="53.4" r="0.7" fill="rgb(112,171,255)"/>
<circle cx="883.4" cy="4.7" r="1.0" fill="rgb(112,171,255)"/>
<circle cx="1082.6" cy="-1.7" r="1.0" fill="rgb(112,171,255)"/>
<circle cx="895.9" cy="53.5" r="0.8" fill="rgb(112,171,255)"/>
<circle cx="1026.5" cy="16.7" r="0.8" fill="rgb(112,171,255)"/>
<circle cx="987.3" cy="20.9" r="1.0" fill="rgb(112,171,255)"/>
<circle cx="1035.9" cy="50.4" r="1.2" fill="rgb(112,171,255)"/>
<circle cx="999.4" cy="28.8" r="1.0" fill="rgb(112,171,255)"/>
<circle cx="1059.5" cy="1.7" r="1.4" fill="rgb(112,171,255)"/>
<circle cx="933.1" cy="31.1" r="0.7" fill="rgb(112,171,255)"/>
<circle cx="992.6" cy="41.2" r="0.9" fill="rgb(112,171,255)"/>
<circle cx="945.3" cy="32.6" r="1.1" fill="rgb(112,171,255)"/>
<circle cx="954.4" cy="40.9" r="1.0" fill="rgb(112,171,255)"/>
<circle cx="1144.7" cy="4.2" r="1.4" fill="rgb(112,171,255)"/>
<circle cx="1120.5" cy="39.8" r="1.5" fill="rgb(118,155,251)"/>
<circle cx="1022.3" cy="34.3" r="1.2" fill="rgb(112,171,255)"/>
<circle cx="1048.5" cy="24.5" r="1.0" fill="rgb(112,171,255)"/>
<circle cx="1006.1" cy="28.8" r="0.8" fill="rgb(112,171,255)"/>
<circle cx="967.5" cy="32.9" r="0.7" fill="rgb(112,171,255)"/>
<circle cx="1134.1" cy="50.7" r="1.4" fill="rgb(127,133,245)"/>
<circle cx="1107.0" cy="37.7" r="1.2" fill="rgb(115,161,252)"/>
<circle cx="1138.8" cy="6.1" r="1.1" fill="rgb(112,171,255)"/>
<circle cx="966.1" cy="53.5" r="1.1" fill="rgb(112,171,255)"/>
<circle cx="1115.1" cy="10.8" r="1.4" fill="rgb(112,171,255)"/>
<circle cx="1140.4" cy="31.3" r="0.9" fill="rgb(115,162,252)"/>
<circle cx="1045.9" cy="18.1" r="1.4" fill="rgb(112,171,255)"/>
<circle cx="1016.5" cy="48.6" r="1.0" fill="rgb(112,171,255)"/>
<circle cx="1074.9" cy="31.9" r="1.3" fill="rgb(112,170,254)"/>
<circle cx="1122.3" cy="47.0" r="0.9" fill="rgb(122,145,248)"/>
<circle cx="1106.3" cy="50.0" r="0.9" fill="rgb(119,151,250)"/>
<circle cx="1063.3" cy="46.0" r="1.3" fill="rgb(112,171,255)"/>
<circle cx="946.4" cy="50.8" r="0.7" fill="rgb(112,171,255)"/>
<circle cx="902.5" cy="46.8" r="0.7" fill="rgb(112,171,255)"/>
<circle cx="1073.7" cy="36.3" r="1.3" fill="rgb(112,171,255)"/>
<circle cx="897.7" cy="26.2" r="1.0" fill="rgb(112,171,255)"/>
<circle cx="1136.6" cy="49.6" r="1.0" fill="rgb(127,134,245)"/>
<circle cx="975.3" cy="46.4" r="1.1" fill="rgb(112,171,255)"/>
<circle cx="1096.4" cy="25.6" r="0.8" fill="rgb(112,171,255)"/>
<circle cx="941.8" cy="51.4" r="0.9" fill="rgb(112,171,255)"/>
<circle cx="1136.7" cy="3.5" r="1.5" fill="rgb(112,171,255)"/>
<circle cx="1010.5" cy="10.6" r="1.0" fill="rgb(112,171,255)"/>
<circle cx="1013.7" cy="42.5" r="0.9" fill="rgb(112,171,255)"/>
<circle cx="1142.2" cy="12.9" r="1.0" fill="rgb(112,171,255)"/>
<circle cx="1146.3" cy="45.1" r="1.6" fill="rgb(126,136,246)"/>
<circle cx="982.5" cy="28.5" r="1.2" fill="rgb(112,171,255)"/>
<circle cx="991.3" cy="14.2" r="0.9" fill="rgb(112,171,255)"/>
<circle cx="997.0" cy="39.7" r="1.1" fill="rgb(112,171,255)"/>
<circle cx="920.3" cy="53.6" r="0.7" fill="rgb(112,171,255)"/>
<circle cx="1025.6" cy="47.8" r="1.0" fill="rgb(112,171,255)"/>
<circle cx="1075.1" cy="46.0" r="1.0" fill="rgb(112,170,254)"/>
<circle cx="1141.1" cy="1.0" r="1.2" fill="rgb(112,171,255)"/>
<circle cx="1113.2" cy="20.6" r="1.2" fill="rgb(112,171,255)"/>
<circle cx="1058.0" cy="44.9" r="1.1" fill="rgb(112,171,255)"/>
<circle cx="1089.7" cy="19.9" r="0.8" fill="rgb(112,171,255)"/>
<circle cx="1028.9" cy="-0.3" r="1.0" fill="rgb(112,171,255)"/>
<circle cx="994.1" cy="29.5" r="0.9" fill="rgb(112,171,255)"/>
<circle cx="1122.6" cy="25.0" r="1.2" fill="rgb(112,171,255)"/>
<circle cx="1140.9" cy="-0.7" r="1.0" fill="rgb(112,171,255)"/>
<circle cx="889.4" cy="19.3" r="1.1" fill="rgb(112,171,255)"/>
<circle cx="936.3" cy="42.8" r="1.2" fill="rgb(112,171,255)"/>
<circle cx="1035.9" cy="41.9" r="1.0" fill="rgb(112,171,255)"/>
<circle cx="1145.4" cy="1.5" r="1.6" fill="rgb(112,171,255)"/>
<circle cx="922.1" cy="17.1" r="0.7" fill="rgb(112,171,255)"/>
<circle cx="890.6" cy="53.0" r="1.1" fill="rgb(112,171,255)"/>
<circle cx="879.4" cy="17.9" r="0.9" fill="rgb(112,171,255)"/>
<circle cx="1119.4" cy="2.4" r="1.2" fill="rgb(112,171,255)"/>
<circle cx="1013.7" cy="35.4" r="1.0" fill="rgb(112,171,255)"/>
<circle cx="1014.2" cy="7.3" r="1.2" fill="rgb(112,171,255)"/>
<circle cx="966.7" cy="53.3" r="1.2" fill="rgb(112,171,255)"/>
<circle cx="1143.5" cy="7.5" r="1.2" fill="rgb(112,171,255)"/>
<circle cx="870.9" cy="30.9" r="0.6" fill="rgb(112,171,255)"/>
<circle cx="1063.3" cy="30.6" r="1.2" fill="rgb(112,171,255)"/>
<circle cx="1143.7" cy="51.9" r="1.4" fill="rgb(130,126,243)"/>
<circle cx="1015.5" cy="36.1" r="1.0" fill="rgb(112,171,255)"/>
<circle cx="852.7" cy="6.7" r="0.7" fill="rgb(112,171,255)"/>
<circle cx="1091.8" cy="32.1" r="1.1" fill="rgb(113,168,254)"/>
<circle cx="930.2" cy="49.7" r="0.8" fill="rgb(112,171,255)"/>
<circle cx="1035.1" cy="16.1" r="1.2" fill="rgb(112,171,255)"/>
<circle cx="1048.7" cy="14.5" r="1.0" fill="rgb(112,171,255)"/>
<circle cx="1064.2" cy="42.0" r="0.9" fill="rgb(112,171,255)"/>
<circle cx="790.1" cy="12.7" r="0.9" fill="rgb(112,171,255)"/>
<circle cx="878.8" cy="32.5" r="0.8" fill="rgb(112,171,255)"/>
<circle cx="945.7" cy="43.6" r="1.1" fill="rgb(112,171,255)"/>
<circle cx="1020.5" cy="41.5" r="1.3" fill="rgb(112,171,255)"/>
<circle cx="981.1" cy="28.7" r="0.7" fill="rgb(112,171,255)"/>
<circle cx="973.8" cy="34.0" r="0.8" fill="rgb(112,171,255)"/>
<circle cx="1129.6" cy="33.7" r="1.4" fill="rgb(116,160,252)"/>
<circle cx="1063.3" cy="14.3" r="1.0" fill="rgb(112,171,255)"/>
<circle cx="998.0" cy="10.1" r="1.0" fill="rgb(112,171,255)"/>
<circle cx="960.0" cy="42.8" r="1.2" fill="rgb(112,171,255)"/>
<circle cx="1091.9" cy="4.2" r="1.1" fill="rgb(112,171,255)"/>
<circle cx="1016.1" cy="21.5" r="1.4" fill="rgb(112,171,255)"/>
<circle cx="1039.4" cy="19.5" r="1.0" fill="rgb(112,171,255)"/>
<circle cx="967.9" cy="30.0" r="0.9" fill="rgb(112,171,255)"/>
<circle cx="1143.0" cy="49.7" r="1.0" fill="rgb(128,130,244)"/>
<circle cx="1062.9" cy="35.8" r="1.3" fill="rgb(112,171,255)"/>
<circle cx="1062.1" cy="50.7" r="1.0" fill="rgb(112,171,255)"/>
<circle cx="1071.0" cy="53.0" r="1.0" fill="rgb(112,171,255)"/>
<circle cx="928.8" cy="7.3" r="1.0" fill="rgb(112,171,255)"/>
<circle cx="1044.0" cy="21.4" r="1.0" fill="rgb(112,171,255)"/>
<circle cx="1117.0" cy="36.3" r="0.9" fill="rgb(116,160,252)"/>
<circle cx="904.2" cy="16.0" r="1.0" fill="rgb(112,171,255)"/>
<circle cx="967.3" cy="38.0" r="0.9" fill="rgb(112,171,255)"/>
<circle cx="924.5" cy="24.4" r="0.9" fill="rgb(112,171,255)"/>
<circle cx="1029.1" cy="35.5" r="1.0" fill="rgb(112,171,255)"/>
<circle cx="1101.7" cy="49.0" r="0.9" fill="rgb(118,155,251)"/>
<circle cx="1114.5" cy="21.7" r="1.1" fill="rgb(112,171,255)"/>
<circle cx="1006.8" cy="19.7" r="0.8" fill="rgb(112,171,255)"/>
<circle cx="926.3" cy="8.2" r="1.0" fill="rgb(112,171,255)"/>
<circle cx="924.7" cy="41.1" r="0.9" fill="rgb(112,171,255)"/>
<circle cx="1141.0" cy="18.8" r="1.3" fill="rgb(112,171,255)"/>
<circle cx="936.9" cy="9.5" r="1.2" fill="rgb(112,171,255)"/>
<circle cx="917.4" cy="49.3" r="0.9" fill="rgb(112,171,255)"/>
<circle cx="752.9" cy="40.9" r="0.5" fill="rgb(112,171,255)"/>
<circle cx="1131.1" cy="18.1" r="0.9" fill="rgb(112,171,255)"/>
<circle cx="1094.2" cy="26.5" r="1.0" fill="rgb(112,170,254)"/>
<circle cx="1118.8" cy="11.8" r="1.3" fill="rgb(112,171,255)"/>
<circle cx="980.8" cy="16.7" r="1.1" fill="rgb(112,171,255)"/>
<circle cx="1057.8" cy="6.2" r="1.0" fill="rgb(112,171,255)"/>
<circle cx="855.0" cy="40.7" r="0.7" fill="rgb(112,171,255)"/>
<circle cx="1065.3" cy="1.9" r="1.4" fill="rgb(112,171,255)"/>
<circle cx="995.0" cy="21.0" r="1.0" fill="rgb(112,171,255)"/>
<circle cx="1107.7" cy="20.2" r="0.9" fill="rgb(112,171,255)"/>
<circle cx="944.9" cy="36.3" r="0.9" fill="rgb(112,171,255)"/>
<circle cx="1063.4" cy="27.5" r="1.1" fill="rgb(112,171,255)"/>
<circle cx="1050.9" cy="2.8" r="1.0" fill="rgb(112,171,255)"/>
<circle cx="999.4" cy="47.8" r="1.2" fill="rgb(112,171,255)"/>
<circle cx="1023.8" cy="6.9" r="1.4" fill="rgb(112,171,255)"/>
<circle cx="822.5" cy="2.2" r="0.9" fill="rgb(112,171,255)"/>
<circle cx="1130.1" cy="7.4" r="1.4" fill="rgb(112,171,255)"/>
<rect x="1139" y="0" width="9" height="17" fill="#7db0ff"/>
</svg>
<div id="search" class="abs"></div>
<div id="userbox" class="abs"></div>
<div id="band" class="abs"></div>
<div id="tools" class="abs"></div>

<!-- logo -->
<svg width="120" height="52" viewBox="0 0 120 52">
  <defs>
    <linearGradient id="lg" gradientUnits="userSpaceOnUse" x1="16" y1="0" x2="79" y2="0">
      <stop offset="0" stop-color="#5a33f5"/><stop offset="0.240" stop-color="#5c38f5"/>
      <stop offset="0.400" stop-color="#9aa2f8"/><stop offset="0.600" stop-color="#8299f9"/>
      <stop offset="0.740" stop-color="#6f9bfb"/><stop offset="0.860" stop-color="#6a6cf6"/>
      <stop offset="0.930" stop-color="#5a33f5"/><stop offset="1" stop-color="#5a33f5"/>
    </linearGradient>
    <linearGradient id="lg2" gradientUnits="userSpaceOnUse" x1="0" y1="9" x2="0" y2="22">
      <stop offset="0" stop-color="#66a8ff" stop-opacity="1"/><stop offset="0.450" stop-color="#66a8ff" stop-opacity="0.800"/><stop offset="1" stop-color="#66a8ff" stop-opacity="0"/>
    </linearGradient>
    <clipPath id="lc"><rect x="58" y="0" width="30" height="24"/></clipPath>
  </defs>
  <text x="15.600 32.700 43.900 58.300 63.900 73.100" y="29" font-size="27" fill="url(#lg)" stroke="url(#lg)" stroke-width="0.500">Syniti</text>
  <text x="15.600 32.700 43.900 58.300 63.900 73.100" y="29" font-size="27" fill="url(#lg2)" stroke="url(#lg2)" stroke-width="0.500" clip-path="url(#lc)">Syniti</text>
</svg>

<!-- search contents -->
<svg width="1414" height="52" viewBox="0 0 1414 52">
  <g transform="translate(113.700,12.060) scale(0.820)">
    <path fill="#000" d="M12 2C6.48 2 2 6.48 2 12s4.48 10 10 10 10-4.48 10-10S17.52 2 12 2zm-1 17.93c-3.95-.49-7-3.85-7-7.93 0-.62.08-1.21.21-1.79L9 15v1c0 1.1.9 2 2 2v1.930zm6.900-2.540c-.26-.81-1-1.390-1.900-1.390h-1v-3c0-.55-.45-1-1-1H8v-2h2c.55 0 1-.45 1-1V7h2c1.100 0 2-.9 2-2v-.41c2.930 1.190 5 4.060 5 7.410 0 2.080-.8 3.970-2.100 5.390z"/>
  </g>
  <path d="M142.600,20.200 L152.400,20.200 L147.500,25.200 Z" fill="#000"/>
  <rect x="169" y="10.300" width="1" height="23.300" fill="#dedede"/>
  <circle cx="555.500" cy="21.200" r="5.900" fill="none" stroke="#555" stroke-width="1.800"/>
  <path d="M559.800,25.800 L561.900,28" stroke="#555" stroke-width="2" stroke-linecap="round"/>
  <!-- apps grid -->
  <g fill="#000">
    <rect x="1165.6" y="11.6" width="6.200" height="6.200" rx="1.500"/><rect x="1172.9" y="11.6" width="6.200" height="6.200" rx="1.500"/><rect x="1180.2" y="11.6" width="6.200" height="6.200" rx="1.500"/>
    <rect x="1165.6" y="18.9" width="6.200" height="6.200" rx="1.500"/><rect x="1172.9" y="18.9" width="6.200" height="6.200" rx="1.500"/><rect x="1180.2" y="18.9" width="6.200" height="6.200" rx="1.500"/>
    <rect x="1165.6" y="26.2" width="6.200" height="6.200" rx="1.500"/><rect x="1172.9" y="26.2" width="6.200" height="6.200" rx="1.500"/><rect x="1180.2" y="26.2" width="6.200" height="6.200" rx="1.500"/>
  </g>
  <circle cx="1224" cy="22" r="18" fill="#2675ab"/>
  <path d="M1397.700,19.900 L1408.300,19.900 L1403,25.200 Z" fill="#888"/>
</svg>
<div class="t" style="left:179.500px;top:18px;font-size:10.200px;color:#8a8a8a">Type a keyword ... we'll see if we can dig it up for you ...</div>
<div class="t" style="left:1211.800px;top:13.600px;font-size:14.400px;color:#fff;-webkit-text-stroke:0.350px #fff">KW</div>
<div class="t" style="left:1260.300px;top:13.900px;font-size:17px;letter-spacing:0.520px;color:#222;-webkit-text-stroke:0.250px #222">Kevin Warden</div>

<!-- title band -->
<div class="t" style="left:14.800px;top:77.100px;font-size:24.250px;color:#222">Syniti Dashboard:</div>
<div class="t" style="left:227.600px;top:81.500px;font-size:12.500px;color:#222;-webkit-text-stroke:0.200px #222">Data Quality Insights</div>
<div class="abs" style="left:228px;top:102px;width:503.300px;height:1.900px;background:#b5b5b8"></div>
<svg width="1414" height="120" viewBox="0 0 1414 120">
  <path d="M714,85 L723.800,85 L718.900,90 Z" fill="#666"/>
  <rect x="1307" y="77" width="11.800" height="11.800" rx="1.500" fill="none" stroke="#0a0a0a" stroke-width="2"/>
</svg>
<div class="t" style="left:1333.600px;top:77.200px;font-size:12.300px;color:#222;-webkit-text-stroke:0.250px #222">Make Default</div>

<!-- toolbar icons -->
<svg width="1414" height="200" viewBox="0 0 1414 200">
  <g fill="none" stroke="#000" stroke-width="2.100">
    <path d="M38.600,150 A6.900,6.900 0 1 0 36.500,155.200"/>
    <path d="M59.100,150 A6.900,6.900 0 1 1 61.200,155.200"/>
  </g>
  <path d="M35.200,150 L42.800,150 L39,154.200 Z" fill="#000"/>
  <path d="M55,150 L62.600,150 L58.800,154.200 Z" fill="#000"/>
  <g fill="none" stroke="#111" stroke-width="1.200">
    <path d="M88.800,150 A6.900,6.900 0 1 1 91,154.900"/>
    <path d="M95.500,145.500 L95.500,149.800 L98.900,149.800"/>
  </g>
  <path d="M86.800,149.200 L90.700,149.200 L88.800,151.500 Z" fill="#111"/>
  <!-- print -->
  <g fill="none" stroke="#111" stroke-width="1.100">
    <rect x="1398.500" y="143.500" width="9" height="3" rx="0.800"/>
    <path d="M1398.500,153.200 L1397.300,153.200 Q1396.500,153.200 1396.500,152.400 L1396.500,147.300 Q1396.500,146.500 1397.300,146.500 L1408.700,146.500 Q1409.500,146.500 1409.500,147.300 L1409.500,152.400 Q1409.500,153.200 1408.700,153.200 L1407.500,153.200"/>
    <rect x="1398.500" y="149.700" width="9" height="6.600" rx="0.800" fill="#fff"/>
  </g>
</svg>

<!-- tabs -->
<svg width="1414" height="200" viewBox="0 0 1414 200">
  <g fill="#fff" stroke="#eeeeee" stroke-width="1">
    <path d="M1019.0,197 L1019.0,170.700 L1185.2,170.700 L1204.8,196.900"/>
    <path d="M840.3,197 L840.3,170.700 L1007.0,170.700 L1026.5,196.900"/>
    <path d="M662.0,197 L662.0,170.700 L828.0,170.700 L847.8,196.900"/>
    <path d="M483.0,197 L483.0,170.700 L649.0,170.700 L668.5,196.900"/>
    <path d="M307.7,197 L307.7,170.700 L474.2,170.700 L493.7,196.900"/>
    <path d="M177.5,197 L177.5,170.700 L303.5,170.700 L318.3,196.900"/>
  </g>
  <path d="M16,170.200 L167.700,170.200 L185.300,196.900 L15.500,196.900 Q14.200,196.900 14.200,195.500 L14.200,172.200 Q14.200,170.200 16,170.200 Z" fill="#f4f4f4"/>
</svg>
<div class="tl" style="left:95.500px;color:#222;font-size:12.300px;-webkit-text-stroke:0.350px #222">Overview</div>
<div class="tl" style="left:237.300px">Vendor Relevance</div>
<div class="tl" style="left:406.500px">Deduplication</div>
<div class="tl" style="left:582px">Housekeeping</div>
<div class="tl" style="left:755.400px">Invoicing and Payments</div>
<div class="tl" style="left:926px">Receiving</div>
<div class="tl" style="left:1110px">Requisition</div>

<!-- cards row 1 -->
<div class="card" style="left:15px;top:215px;width:525px;height:225px"></div>
<div class="card" style="left:551px;top:215px;width:294px;height:225px"></div>
<div class="card" style="left:857px;top:215px;width:265px;height:225px"></div>
<div class="card" style="left:1133px;top:215px;width:258px;height:225px"></div>
<!-- cards row 2 -->
<div class="card" style="left:15px;top:452px;width:334px;height:224px"></div>
<div class="card nb" style="left:361px;top:452px;width:336px;height:221px"></div>
<div class="card nb" style="left:709px;top:452px;width:335px;height:221px"></div>
<div class="card nb" style="left:1056px;top:452px;width:335px;height:221px"></div>
<!-- card row 3 -->
<div class="card" style="left:15px;top:688px;width:1374px;height:300px"></div>

<div class="ct" style="left:29px;top:227.900px">Overall Data Quality</div>
<div class="ct" style="left:559px;top:224.700px;font-size:11.900px">Total Defects</div>
<div class="ct" style="left:865px;top:224.500px;font-size:12.200px">Total Cost of Defects</div>
<div class="ct" style="left:1141px;top:224.700px;font-size:11.900px">Defects Per Million Opportunities</div>
<div class="ct" style="left:22.400px;top:461.100px">Report Count</div>
<div class="ct" style="left:369px;top:461px;font-size:12.100px">Count of Record by Report Type</div>
<div class="ct" style="left:722px;top:465.100px;font-size:11.900px">Technical Relevancy</div>
<div class="ct" style="left:1069px;top:464.100px;font-size:12px">Functional Relevancy</div>
<div class="ct" style="left:45.700px;top:705px;font-size:12.270px">Overall Data Quality by Dimensions</div>

<div class="kpi" style="left:610.500px;top:327.600px">25,054</div>
<div class="kpi" style="left:888px;top:327.600px;color:#de3b00;letter-spacing:1.250px">-$630.52k</div>
<div class="kpi" style="left:1181px;top:327.600px;letter-spacing:0.950px">152.49k</div>
<div class="kpi" style="left:153px;top:564.200px;letter-spacing:1.100px">157</div>

<!-- charts -->
<svg width="1414" height="960" viewBox="0 0 1414 960">
  <path d="M134.00,388.00 A137,137 0 0 1 408.00,388.00 L373.00,388.00 A102,102 0 0 0 169.00,388.00 Z" fill="#d6d6d6"/><path d="M134.00,388.00 A137,137 0 0 1 397.67,335.81 L365.31,349.14 A102,102 0 0 0 169.00,388.00 Z" fill="#f7e65a"/>
  <rect x="369" y="382.800" width="44" height="5" fill="#969696"/>
  <text x="271" y="388" font-size="11.500" text-anchor="middle" fill="#000">84.75%</text>
  <text x="151" y="400" font-size="7.500" text-anchor="middle" fill="#000">0.0%</text>
  <text x="391.500" y="400" font-size="7.500" text-anchor="middle" fill="#000">100%</text>
  <text x="403.500" y="338" font-size="7.500" fill="#000">84.8%</text>

  <path d="M741.90,623.50 A124.3,124.3 0 0 1 990.50,623.50 L958.50,623.50 A92.3,92.3 0 0 0 773.90,623.50 Z" fill="#d6d6d6"/><path d="M741.90,623.50 A124.3,124.3 0 0 1 989.69,609.32 L957.90,612.97 A92.3,92.3 0 0 0 773.90,623.50 Z" fill="#2ca81f"/>
  <rect x="955.400" y="619" width="39.600" height="4.600" fill="#969696"/>
  <text x="869.500" y="624.500" font-size="11.500" text-anchor="middle" fill="#000">98.07%</text>
  <text x="760.500" y="635.500" font-size="7.500" text-anchor="middle" fill="#000">0.0%</text>
  <text x="972.500" y="635.500" font-size="7.500" text-anchor="middle" fill="#000">100%</text>
  <text x="993.500" y="607" font-size="7.500" fill="#000">2,438</text>

  <path d="M1090.90,624.00 A124.3,124.3 0 0 1 1339.50,624.00 L1307.50,624.00 A92.3,92.3 0 0 0 1122.90,624.00 Z" fill="#d6d6d6"/><path d="M1090.90,624.00 A124.3,124.3 0 0 1 1127.00,536.41 L1149.71,558.96 A92.3,92.3 0 0 0 1122.90,624.00 Z" fill="#2ca81f"/>
  <rect x="1304" y="620" width="40" height="4.600" fill="#969696"/>
  <text x="1218" y="625.300" font-size="11.500" text-anchor="middle" fill="#000">23.45%</text>
  <text x="1109.500" y="636.500" font-size="7.500" text-anchor="middle" fill="#000">0.0%</text>
  <text x="1323.500" y="636.500" font-size="7.500" text-anchor="middle" fill="#000">100%</text>
  <text x="1114" y="530.500" font-size="7.500" fill="#000">534</text>

  <!-- pie -->
  <circle cx="508" cy="570" r="78.200" fill="#2a5a75"/>
  <path d="M508,570 L508,491.800 A78.200,78.200 0 0 1 586.200,570 Z" fill="#a0dff2"/>
  <path d="M562,512 L566.800,503.400 L573.500,503.400" fill="none" stroke="#a0dff2" stroke-width="1"/>
  <path d="M443,614.200 L438,624 L431.400,624" fill="none" stroke="#2a5a75" stroke-width="1"/>
  <text x="580.700" y="504.500" font-size="5.800" fill="#1c1c1c">Info</text>
  <text x="580.700" y="511.500" font-size="5.800" fill="#1c1c1c">(40)25%</text>
  <text x="428" y="624" font-size="5.800" fill="#1c1c1c" text-anchor="end">Error</text>
  <text x="428" y="631" font-size="5.800" fill="#1c1c1c" text-anchor="end">(117)75%</text>
  <text x="634" y="485.900" font-size="7.600" fill="#1c1c1c">Report Type</text>
  <rect x="634" y="499" width="12" height="11.600" fill="#a0dff2"/>
  <rect x="634" y="514.900" width="12" height="10.800" fill="#2a5a75"/>
  <text x="651" y="505.700" font-size="5.800" fill="#1c1c1c">Info</text>
  <text x="651" y="521.300" font-size="5.800" fill="#1c1c1c">Error</text>

  <!-- bar chart -->
  <g stroke="#ebebeb" stroke-width="1.200">
    <path d="M107,747.200 L1338,747.200"/>
    <path d="M102.500,818.750 L1333,818.750"/>
    <path d="M102.500,890.400 L1333,890.400"/>
  </g>
  <g fill="#63e2f2">
    <rect x="120" y="747" width="128" height="220"/>
    <rect x="332" y="763" width="128" height="200"/>
    <rect x="544" y="779" width="128.500" height="190"/>
    <rect x="756.500" y="876" width="128" height="90"/>
  </g>
  <g font-size="9.700" fill="#222">
    <text x="70.700" y="749.600">100%</text>
    <text x="70.700" y="821.400">80%</text>
    <text x="70.700" y="893">60%</text>
    <text x="70.700" y="964">40%</text>
  </g>
  <g font-size="9.900" fill="#000" text-anchor="middle">
    <text x="184" y="891">99.845%</text>
    <text x="396" y="899">95.006%</text>
    <text x="608" y="907">92.868%</text>
    <text x="820.500" y="956">64.644%</text>
  </g>
</svg>
</div>
</body>
</html>
